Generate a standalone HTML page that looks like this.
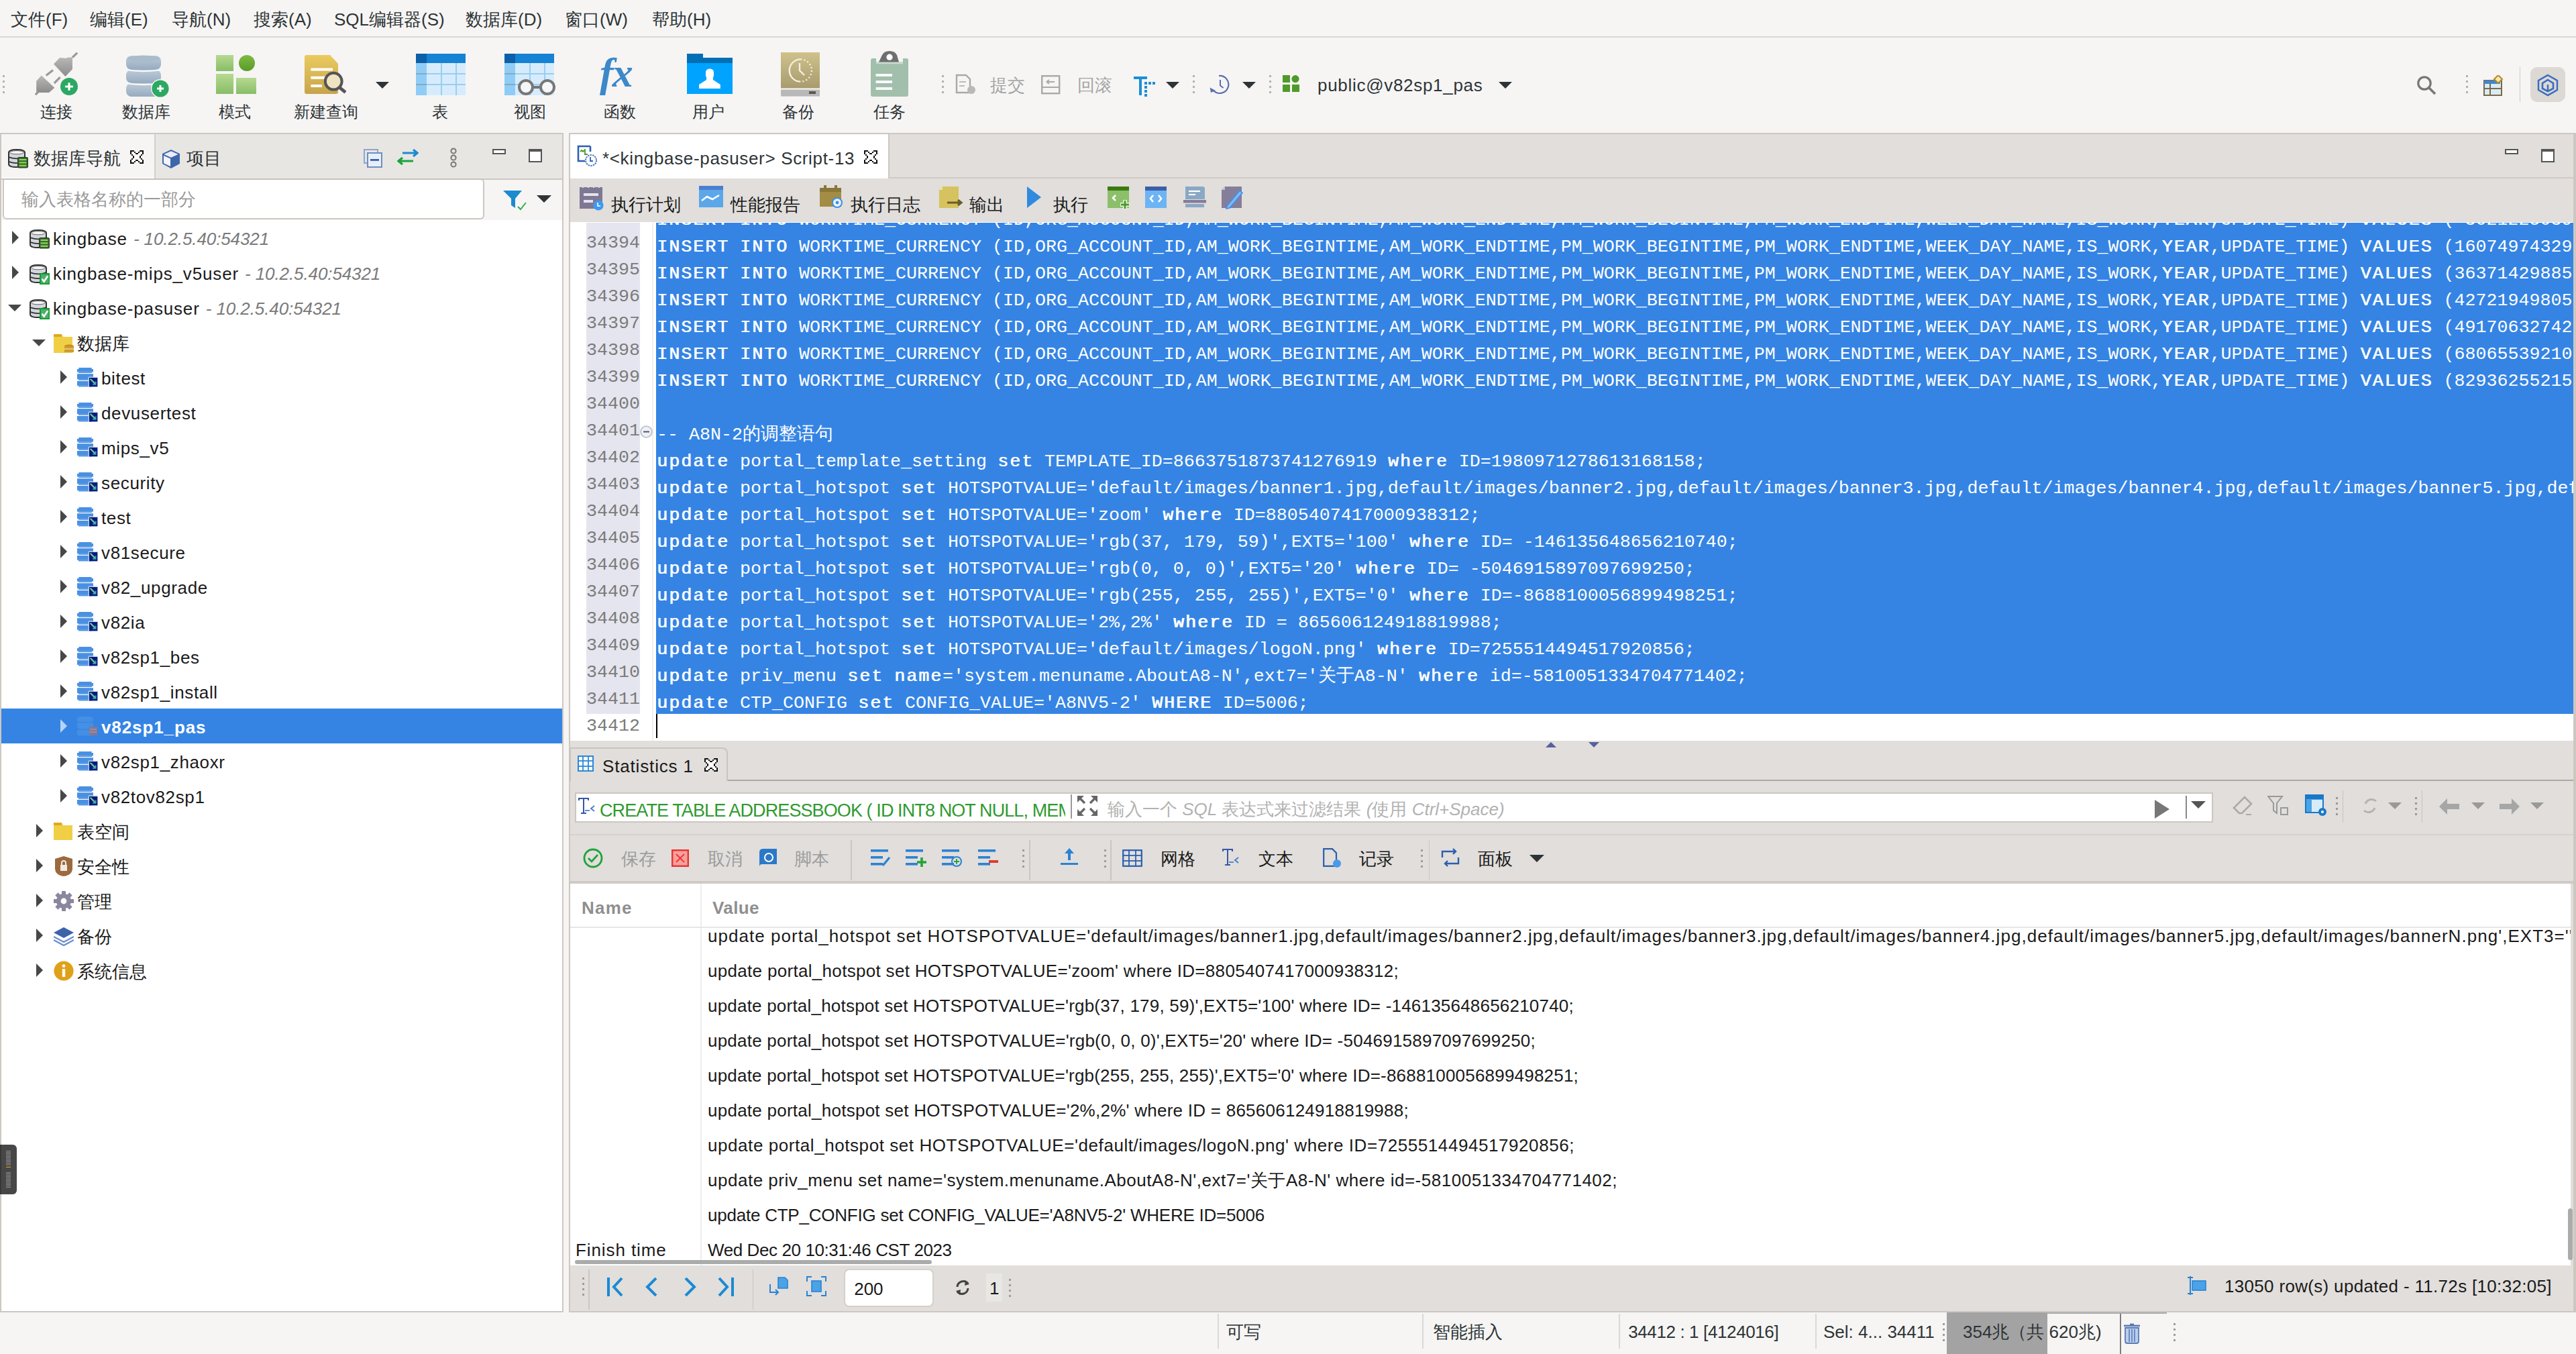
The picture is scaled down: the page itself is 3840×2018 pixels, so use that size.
<!DOCTYPE html>
<html><head><meta charset="utf-8"><title>KingbaseES</title>
<style>
html,body{margin:0;padding:0;background:#f6f5f4;overflow:hidden}
#s{position:relative;width:1920px;height:1009px;zoom:2;overflow:hidden;background:#f6f5f4;font-family:"Liberation Sans",sans-serif;font-size:13px}
#s div,#s span.t,#s svg{position:absolute}
#s span.t{white-space:nowrap}
#s span.t span{position:static}
.codewrap{left:489px;top:166px;width:1429px;height:386px;overflow:hidden}
.code{position:absolute;left:0.5px;height:20px;line-height:20px;font-family:"Liberation Mono",monospace;font-size:13.333px;color:#fff;white-space:pre}
.code b{font-weight:normal;letter-spacing:1px;text-shadow:0.4px 0 0 #fff}
.lnwrap{left:437px;top:166px;width:40px;height:386px;overflow:hidden}
.ln{position:absolute;left:0;width:39.5px;text-align:right;height:20px;line-height:20px;font-family:"Liberation Mono",monospace;font-size:13.333px;color:#7b7b7b}
</style></head>
<body><div id="s">
<span class="t" style="left:8px;top:5.5px;line-height:18px;font-size:13px;color:#2e3436">文件(F)</span>
<span class="t" style="left:67px;top:5.5px;line-height:18px;font-size:13px;color:#2e3436">编辑(E)</span>
<span class="t" style="left:128px;top:5.5px;line-height:18px;font-size:13px;color:#2e3436">导航(N)</span>
<span class="t" style="left:189px;top:5.5px;line-height:18px;font-size:13px;color:#2e3436">搜索(A)</span>
<span class="t" style="left:249px;top:5.5px;line-height:18px;font-size:13px;color:#2e3436">SQL编辑器(S)</span>
<span class="t" style="left:347px;top:5.5px;line-height:18px;font-size:13px;color:#2e3436">数据库(D)</span>
<span class="t" style="left:421px;top:5.5px;line-height:18px;font-size:13px;color:#2e3436">窗口(W)</span>
<span class="t" style="left:486px;top:5.5px;line-height:18px;font-size:13px;color:#2e3436">帮助(H)</span>
<div style="left:0px;top:27px;width:1920px;height:1px;background:#dcd8d4"></div>
<div style="left:2px;top:56px;width:1.5px;height:1.5px;background:#b9b3ad"></div>
<div style="left:2px;top:60px;width:1.5px;height:1.5px;background:#b9b3ad"></div>
<div style="left:2px;top:64px;width:1.5px;height:1.5px;background:#b9b3ad"></div>
<div style="left:2px;top:68px;width:1.5px;height:1.5px;background:#b9b3ad"></div>
<svg style="left:26px;top:39px" width="32" height="32" viewBox="0 0 32 32">
<defs><linearGradient id="plg" x1="0" x2="0" y1="0" y2="1"><stop offset="0" stop-color="#b8b8b8"/><stop offset="1" stop-color="#8c8c8c"/></linearGradient></defs>
<path d="M14 8.7 L18.5 4 L23 4.4 L25 3.7 L28 3.7 L28 12.5 L22.7 18 Z" fill="url(#plg)"/>
<path d="M1.1 21.4 L4.9 17.3 L14.7 26.4 L10.5 30 L1.1 30 Z" fill="url(#plg)"/>
<g stroke="#999" stroke-width="1.6"><line x1="28" y1="3.8" x2="31.6" y2="0.3"/><line x1="8.4" y1="17.2" x2="13.5" y2="13.2"/><line x1="14.4" y1="23" x2="18.8" y2="18.6"/><line x1="0.4" y1="31.6" x2="2.5" y2="29.5"/></g>
<circle cx="25.5" cy="25.5" r="6.5" fill="#2ba862"/><path d="M22.6 25.5h5.8M25.5 22.6v5.8" stroke="#fff" stroke-width="1.5"/></svg>
<span class="t" style="left:7.0px;top:75.5px;width:70px;text-align:center;line-height:16px;font-size:12px;color:#2e3436">连接</span>
<svg style="left:93px;top:40px" width="34" height="33" viewBox="0 0 34 33">
<defs><linearGradient id="dbg" x1="0" x2="0" y1="0" y2="1"><stop offset="0" stop-color="#bccbd8"/><stop offset="1" stop-color="#97abbf"/></linearGradient></defs>
<g fill="url(#dbg)">
<rect x="1" y="1.5" width="26" height="10.5" rx="4"/><rect x="1" y="12" width="26" height="10" rx="4"/><rect x="1" y="22" width="26" height="10" rx="4"/></g>
<ellipse cx="14" cy="3.6" rx="12" ry="2.3" fill="#a9bccc"/>
<g stroke="#f4f7fa" stroke-width="1.1" fill="none"><path d="M2 12.2 Q14 14 26 12.2"/><path d="M2 22.2 Q14 24 26 22.2"/></g>
<circle cx="26.5" cy="26" r="7" fill="#f6f5f4"/><circle cx="26.5" cy="26" r="6.3" fill="#2ba862"/><path d="M24 26h5M26.5 23.5v5" stroke="#fff" stroke-width="1.5"/></svg>
<span class="t" style="left:74.0px;top:75.5px;width:70px;text-align:center;line-height:16px;font-size:12px;color:#2e3436">数据库</span>
<svg style="left:160px;top:40px" width="33" height="32" viewBox="0 0 33 32">
<defs><linearGradient id="mg" x1="0" x2="0" y1="0" y2="1"><stop offset="0" stop-color="#b6d991"/><stop offset="1" stop-color="#88bd66"/></linearGradient>
<linearGradient id="mc" x1="0" x2="0" y1="0" y2="1"><stop offset="0" stop-color="#7fba45"/><stop offset="1" stop-color="#5a9c25"/></linearGradient></defs>
<rect x="1" y="1" width="13" height="12" fill="url(#mg)"/><circle cx="24" cy="7" r="6" fill="url(#mc)"/>
<rect x="1" y="15" width="13" height="15" fill="url(#mg)"/><rect x="16" y="18" width="15" height="12" fill="url(#mg)"/></svg>
<span class="t" style="left:140.0px;top:75.5px;width:70px;text-align:center;line-height:16px;font-size:12px;color:#2e3436">模式</span>
<svg style="left:227px;top:40px" width="34" height="32" viewBox="0 0 34 32">
<defs><linearGradient id="qg" x1="0" x2="0" y1="0" y2="1"><stop offset="0" stop-color="#ebca5f"/><stop offset="1" stop-color="#c8a44b"/></linearGradient></defs>
<path d="M1.5 1 H19 L25 7.5 V28.5 Q25 30 23.5 30 H1.5 Q0 30 0 28.5 V2.5 Q0 1 1.5 1 Z" fill="url(#qg)"/>
<g stroke="#fff" stroke-width="2"><line x1="4.7" y1="11.7" x2="21" y2="11.7"/><line x1="4.7" y1="17.9" x2="16.3" y2="17.9"/><line x1="4.7" y1="24" x2="13" y2="24"/></g>
<circle cx="21.6" cy="20.6" r="6.2" fill="#efe3c2" stroke="#555" stroke-width="2"/><line x1="25.8" y1="25" x2="30.5" y2="28.8" stroke="#555" stroke-width="2.4"/></svg>
<svg style="left:280px;top:61px" width="10" height="5" viewBox="0 0 10 5"><path d="M0 0 H10 L5 5 Z" fill="#2e3436"/></svg>
<span class="t" style="left:208.0px;top:75.5px;width:70px;text-align:center;line-height:16px;font-size:12px;color:#2e3436">新建查询</span>
<svg style="left:310px;top:40px" width="38" height="32" viewBox="0 0 38 32"><rect x="0" y="0" width="37" height="31" fill="#d6ecfd"/>
<rect x="0" y="0" width="37" height="7" fill="#1582d4"/><rect x="0" y="0" width="8" height="7" fill="#0d5fa8"/>
<rect x="0" y="7" width="8" height="24" fill="#8fcdf6"/>
<g stroke="#9bcdee" stroke-width="1"><line x1="8" y1="15" x2="37" y2="15"/><line x1="8" y1="23" x2="37" y2="23"/><line x1="19" y1="7" x2="19" y2="31"/><line x1="30" y1="7" x2="30" y2="31"/></g>
<g stroke="#8aa9bd" stroke-width="1"><line x1="0" y1="15" x2="8" y2="15"/><line x1="0" y1="23" x2="8" y2="23"/></g></svg>
<span class="t" style="left:293.0px;top:75.5px;width:70px;text-align:center;line-height:16px;font-size:12px;color:#2e3436">表</span>
<svg style="left:376px;top:40px" width="38" height="32" viewBox="0 0 38 32"><rect x="0" y="0" width="37" height="31" fill="#d6ecfd"/>
<rect x="0" y="0" width="37" height="7" fill="#1582d4"/><rect x="0" y="0" width="8" height="7" fill="#0d5fa8"/>
<rect x="0" y="7" width="8" height="24" fill="#8fcdf6"/>
<g stroke="#9bcdee" stroke-width="1"><line x1="8" y1="15" x2="37" y2="15"/><line x1="8" y1="23" x2="37" y2="23"/><line x1="19" y1="7" x2="19" y2="31"/><line x1="30" y1="7" x2="30" y2="31"/></g>
<g stroke="#8aa9bd" stroke-width="1"><line x1="0" y1="15" x2="8" y2="15"/><line x1="0" y1="23" x2="8" y2="23"/></g><g fill="#f4f6f8" stroke="#777" stroke-width="2"><circle cx="16" cy="25" r="5"/><circle cx="32" cy="25" r="5"/></g><line x1="21" y1="25" x2="27" y2="25" stroke="#777" stroke-width="2"/></svg>
<span class="t" style="left:360.0px;top:75.5px;width:70px;text-align:center;line-height:16px;font-size:12px;color:#2e3436">视图</span>
<span class="t" style="left:447px;top:36px;font-family:'Liberation Serif',serif;font-style:italic;font-weight:bold;font-size:31px;line-height:36px;color:#3d88c9;letter-spacing:-1px">fx</span>
<span class="t" style="left:427.0px;top:75.5px;width:70px;text-align:center;line-height:16px;font-size:12px;color:#2e3436">函数</span>
<svg style="left:512px;top:40px" width="34" height="30" viewBox="0 0 34 30"><rect x="0" y="3" width="34" height="27" fill="#00a3ff"/><rect x="0" y="3" width="34" height="4" fill="#006fb3"/><rect x="0" y="0" width="12" height="3.2" fill="#006fb3"/>
<rect x="14" y="11.2" width="6" height="7.5" rx="2.6" fill="#fff"/><path d="M14.5 18 H19.5 L19.5 19.5 L24.9 23 V26 H9 V23 L14.5 19.5 Z" fill="#fff"/></svg>
<span class="t" style="left:493.0px;top:75.5px;width:70px;text-align:center;line-height:16px;font-size:12px;color:#2e3436">用户</span>
<svg style="left:582px;top:39px" width="30" height="33" viewBox="0 0 30 33"><defs><linearGradient id="bkg" x1="0" x2="0" y1="0" y2="1"><stop offset="0" stop-color="#cfc28c"/><stop offset="1" stop-color="#a89b6e"/></linearGradient></defs>
<rect x="0" y="0" width="29" height="26.7" fill="url(#bkg)"/><rect x="0" y="27.8" width="29" height="5" fill="#b8b8b8"/><rect x="21" y="29" width="5" height="2" fill="#5e5850"/>
<path d="M14.7 5.2 A8.3 8.3 0 0 0 14.7 21.8" fill="none" stroke="#f4efe0" stroke-width="1.2"/><path d="M14.7 5.2 A8.3 8.3 0 0 1 14.7 21.8" fill="none" stroke="#f4efe0" stroke-width="1.2" stroke-dasharray="1 1.6"/><path d="M14 8 V13.5 L17.5 17" stroke="#f4efe0" stroke-width="1.2" fill="none"/></svg>
<span class="t" style="left:560.0px;top:75.5px;width:70px;text-align:center;line-height:16px;font-size:12px;color:#2e3436">备份</span>
<svg style="left:649px;top:38px" width="29" height="35" viewBox="0 0 29 35"><path d="M1.5 5.5 H4 V8.8 H24 V5.5 H26.5 Q28 5.5 28 7 V32.5 Q28 34 26.5 34 H1.5 Q0 34 0 32.5 V7 Q0 5.5 1.5 5.5 Z" fill="#a2bfac"/><rect x="4" y="8" width="20" height="1.6" fill="#c9dccf"/>
<path d="M6 8.2 L8.5 3 Q10 0 14 0 Q18 0 19.5 3 L21 8.2 Z" fill="#6f6f6f"/><circle cx="14" cy="4.6" r="2.3" fill="#fff"/>
<g fill="#f8f8fa"><rect x="3.8" y="17" width="12.2" height="2"/><rect x="3.8" y="22" width="12.2" height="2"/><rect x="3.8" y="27" width="12.2" height="2"/></g></svg>
<span class="t" style="left:628.0px;top:75.5px;width:70px;text-align:center;line-height:16px;font-size:12px;color:#2e3436">任务</span>
<div style="left:702px;top:56px;width:1.5px;height:1.5px;background:#b7b1aa"></div>
<div style="left:702px;top:60px;width:1.5px;height:1.5px;background:#b7b1aa"></div>
<div style="left:702px;top:64px;width:1.5px;height:1.5px;background:#b7b1aa"></div>
<div style="left:702px;top:68px;width:1.5px;height:1.5px;background:#b7b1aa"></div>
<svg style="left:712px;top:55px" width="16" height="16" viewBox="0 0 16 16"><path d="M1 1 H8 L11 4 V14 H1 Z" fill="none" stroke="#a9a9a9" stroke-width="1.2"/><line x1="3" y1="6" x2="8" y2="6" stroke="#bbb"/><line x1="3" y1="9" x2="7" y2="9" stroke="#bbb"/><circle cx="12" cy="12" r="3" fill="#b9b9b9"/></svg>
<span class="t" style="left:738px;top:55.5px;line-height:16px;font-size:13px;color:#a4a4a4">提交</span>
<svg style="left:776px;top:56px" width="15" height="15" viewBox="0 0 15 15"><rect x="0.6" y="0.6" width="13" height="13" fill="none" stroke="#a9a9a9" stroke-width="1.2"/><line x1="0.6" y1="9" x2="13.6" y2="9" stroke="#a9a9a9"/><path d="M4 5 H10 M4 5 L6 3.5 M4 5 L6 6.5" stroke="#aaa" fill="none"/></svg>
<span class="t" style="left:803px;top:55.5px;line-height:16px;font-size:13px;color:#a4a4a4">回滚</span>
<svg style="left:845px;top:56px" width="16" height="16" viewBox="0 0 16 16"><path d="M0 1 H10 V3 H6 V15 H4 V3 H0 Z" fill="#1c8fd6"/><g fill="#1c8fd6"><rect x="8" y="5" width="2" height="2"/><rect x="11" y="5" width="2" height="2"/><rect x="14" y="5" width="2" height="2"/><rect x="8" y="8" width="2" height="2"/><rect x="8" y="11" width="2" height="2"/><rect x="8" y="14" width="2" height="2"/></g></svg>
<svg style="left:869px;top:61px" width="10" height="6" viewBox="0 0 10 6"><path d="M0 0 H10 L5 5 Z" fill="#2e3436"/></svg>
<div style="left:889px;top:56px;width:1.5px;height:1.5px;background:#b7b1aa"></div>
<div style="left:889px;top:60px;width:1.5px;height:1.5px;background:#b7b1aa"></div>
<div style="left:889px;top:64px;width:1.5px;height:1.5px;background:#b7b1aa"></div>
<div style="left:889px;top:68px;width:1.5px;height:1.5px;background:#b7b1aa"></div>
<svg style="left:901px;top:55px" width="16" height="16" viewBox="0 0 16 16"><path d="M3.5 12.5 A6.5 6.5 0 1 0 7.5 1.5" fill="none" stroke="#5b6fb0" stroke-width="1.1"/><path d="M8.5 4.5 V8.8 L10.8 10.5" fill="none" stroke="#5b6fb0" stroke-width="1"/><path d="M0.8 10.2 L1.5 14 L5 12.5 Z" fill="#5b6fb0"/></svg>
<svg style="left:926px;top:61px" width="10" height="6" viewBox="0 0 10 6"><path d="M0 0 H10 L5 5 Z" fill="#2e3436"/></svg>
<div style="left:946px;top:56px;width:1.5px;height:1.5px;background:#b7b1aa"></div>
<div style="left:946px;top:60px;width:1.5px;height:1.5px;background:#b7b1aa"></div>
<div style="left:946px;top:64px;width:1.5px;height:1.5px;background:#b7b1aa"></div>
<div style="left:946px;top:68px;width:1.5px;height:1.5px;background:#b7b1aa"></div>
<svg style="left:956px;top:56px" width="13" height="13" viewBox="0 0 13 13"><rect x="0" y="0" width="5.5" height="5.5" fill="#4f9a2a"/><circle cx="9.5" cy="2.8" r="2.8" fill="#4f9a2a"/><rect x="0" y="7" width="5.5" height="5.5" fill="#4f9a2a"/><rect x="7" y="7" width="5.5" height="5.5" fill="#4f9a2a"/></svg>
<span class="t" style="left:982px;top:55.5px;line-height:16px;font-size:13px;color:#2e3436;letter-spacing:0.35px">public@v82sp1_pas</span>
<svg style="left:1117px;top:61px" width="10" height="6" viewBox="0 0 10 6"><path d="M0 0 H10 L5 5 Z" fill="#2e3436"/></svg>
<svg style="left:1801px;top:56px" width="16" height="16" viewBox="0 0 16 16"><circle cx="6" cy="6" r="4.6" fill="none" stroke="#777" stroke-width="1.6"/><line x1="9.5" y1="9.5" x2="14" y2="14" stroke="#777" stroke-width="1.8"/></svg>
<div style="left:1838px;top:56px;width:1.5px;height:1.5px;background:#b7b1aa"></div>
<div style="left:1838px;top:60px;width:1.5px;height:1.5px;background:#b7b1aa"></div>
<div style="left:1838px;top:64px;width:1.5px;height:1.5px;background:#b7b1aa"></div>
<div style="left:1838px;top:68px;width:1.5px;height:1.5px;background:#b7b1aa"></div>
<svg style="left:1851px;top:56px" width="16" height="16" viewBox="0 0 16 16"><rect x="0.5" y="4" width="13" height="11" fill="#d9ebf9" stroke="#7a6a44"/><rect x="0.5" y="4" width="12" height="2.5" fill="#3f86d4"/><line x1="5" y1="6" x2="5" y2="15" stroke="#7a6a44"/><line x1="0.5" y1="10" x2="13" y2="10" stroke="#7a6a44"/><path d="M11 0 L14 3 L11 6 L8 3 Z" fill="#f4e7b8" stroke="#b88a1b"/></svg>
<div style="left:1878px;top:50px;width:0.6px;height:26px;background:#d0cbc6"></div>
<div style="left:1886px;top:50px;width:26px;height:26px;background:#dcd8d4;border-radius:5px"></div>
<svg style="left:1891px;top:55px" width="16" height="17" viewBox="0 0 16 17"><path d="M8 1 L15 5 V12 L8 16 L1 12 V5 Z" fill="none" stroke="#3a6cc0" stroke-width="1.2"/><path d="M8 4.5 L12 7 V11 L8 13 L4 11 V7 Z" fill="none" stroke="#3a6cc0" stroke-width="1.3"/><line x1="8" y1="8" x2="8" y2="13" stroke="#3a6cc0" stroke-width="1.2"/></svg>
<div style="left:0px;top:99px;width:420px;height:879px;background:#fff;border:1px solid #cdc7c2;box-sizing:border-box"></div>
<div style="left:1px;top:100px;width:418px;height:34px;background:#e8e6e3;border-bottom:1px solid #cdc7c2;box-sizing:border-box"></div>
<div style="left:1px;top:100px;width:114px;height:33px;background:#f6f5f4"></div>
<div style="left:1px;top:132px;width:114px;height:1px;background:#fafafa"></div>
<div style="left:115px;top:100px;width:1px;height:33px;background:#d3cfcb"></div>
<span class="t" style="left:25px;top:110.0px;line-height:16px;font-size:13px;color:#2e3436">数据库导航</span>
<svg style="left:97px;top:112px" width="10" height="10" viewBox="0 0 10 10"><path d="M1 1h2v1h-2zM7 1h2v1h-2zM1 2h3v1h-3zM6 2h3v1h-3zM2 3h6v1h-6zM3 4h4v2h-4zM2 6h6v1h-6zM1 7h3v1h-3zM6 7h3v1h-3zM1 8h2v1h-2zM7 8h2v1h-2z" fill="#fff" shape-rendering="crispEdges"/><path d="M0 0h3v1h-3zM7 0h3v1h-3zM0 1h1v2h-1zM3 1h1v1h-1zM6 1h1v1h-1zM9 1h1v2h-1zM4 2h2v1h-2zM1 3h1v1h-1zM8 3h1v1h-1zM2 4h1v2h-1zM7 4h1v2h-1zM1 6h1v1h-1zM8 6h1v1h-1zM0 7h1v2h-1zM4 7h2v1h-2zM9 7h1v2h-1zM3 8h1v1h-1zM6 8h1v1h-1zM0 9h3v1h-3zM7 9h3v1h-3z" fill="#111" shape-rendering="crispEdges"/></svg>
<svg style="left:120px;top:111px" width="15" height="15" viewBox="0 0 15 15"><path d="M7.5 0.5 L14 3.5 V11 L7.5 14.5 L1 11 V3.5 Z" fill="#3e67ab"/><path d="M2.2 4 L7.5 1.6 L12.8 4 L7.5 6.4 Z" fill="#e9eef7"/><path d="M2 5 L7 7.2 V13 L2 10.6 Z" fill="#f2f4f8"/></svg>
<span class="t" style="left:139px;top:110.0px;line-height:16px;font-size:13px;color:#2e3436">项目</span>
<svg style="left:271px;top:111px" width="14" height="14" viewBox="0 0 14 14"><rect x="0.5" y="0.5" width="10" height="10" fill="none" stroke="#8ea7cc"/><rect x="3" y="3" width="10.5" height="10.5" fill="#e8eef8" stroke="#6f8fbf"/><line x1="5" y1="8.2" x2="11.5" y2="8.2" stroke="#2456a6" stroke-width="1.3"/></svg>
<svg style="left:296px;top:111px" width="16" height="12" viewBox="0 0 16 12"><path d="M4 3 H15 M12 0.5 L15 3 L12 5.5" stroke="#1c8ad0" stroke-width="1.6" fill="none"/><path d="M12 9 H1 M4 6.5 L1 9 L4 11.5" stroke="#19a43a" stroke-width="1.6" fill="none"/></svg>
<svg style="left:335px;top:110px" width="6" height="15" viewBox="0 0 6 15"><g fill="none" stroke="#777" stroke-width="1"><circle cx="3" cy="2.5" r="1.8"/><circle cx="3" cy="7.5" r="1.8"/><circle cx="3" cy="12.5" r="1.8"/></g></svg>
<div style="left:367px;top:111px;width:10px;height:4px;border:1px solid #555;box-sizing:border-box;background:#fff"></div>
<div style="left:394px;top:111px;width:10px;height:10px;border:1px solid #555;border-top-width:2px;box-sizing:border-box;background:#fff"></div>
<div style="left:1px;top:134px;width:418px;height:30px;background:#f6f5f4"></div>
<div style="left:2px;top:133px;width:359px;height:30.5px;background:#fff;border:1px solid #cdc7c2;border-top-color:#c7c1bc;border-radius:0 3px 3px 3px;box-sizing:border-box"></div>
<span class="t" style="left:16px;top:140.5px;line-height:16px;font-size:13px;color:#9a9a9a">输入表格名称的一部分</span>
<svg style="left:375px;top:141px" width="18" height="16" viewBox="0 0 18 16"><path d="M0 1 H14 L9 7 V14 L6 12 V7 Z" fill="#1c8ad0"/><path d="M11 13 L13 15 L17 10" stroke="#2fae4c" stroke-width="1" fill="none"/></svg>
<svg style="left:400px;top:145.5px" width="11" height="6" viewBox="0 0 11 6"><path d="M0 0 H11 L5.5 5.5 Z" fill="#2e3436"/></svg>
<svg style="left:6px;top:111px" width="15" height="15" viewBox="0 0 15 15"><path d="M0.5 2.8 Q0.5 0.5 6.5 0.5 Q12.5 0.5 12.5 2.8 V11.2 Q12.5 13.5 6.5 13.5 Q0.5 13.5 0.5 11.2 Z" fill="#d3d6dc" stroke="#333" stroke-width="1"/><ellipse cx="6.5" cy="2.6" rx="5.2" ry="1.3" fill="#f6f6f6" stroke="#666" stroke-width="0.5"/><g stroke="#333" stroke-width="0.9" fill="none"><path d="M0.8 6.2 Q6.5 8.2 12.2 6.2"/><path d="M0.8 9.6 Q6.5 11.6 12.2 9.6"/></g><rect x="7.3" y="6.3" width="7.4" height="7.6" rx="0.8" fill="#405f35" stroke="#2c3f25" stroke-width="0.6"/><g stroke="#82e04f" stroke-width="1.1"><line x1="8.3" y1="8" x2="13.7" y2="8"/><line x1="8.3" y1="10.2" x2="13.7" y2="10.2"/><line x1="8.3" y1="12.4" x2="13.7" y2="12.4"/></g></svg>
<svg style="left:9px;top:172px" width="5" height="10" viewBox="0 0 5 10"><path d="M0 0 L5 5 L0 10 Z" fill="#474747"/></svg>
<svg style="left:22px;top:171px" width="15" height="15" viewBox="0 0 15 15"><path d="M0.5 2.8 Q0.5 0.5 6.5 0.5 Q12.5 0.5 12.5 2.8 V11.2 Q12.5 13.5 6.5 13.5 Q0.5 13.5 0.5 11.2 Z" fill="#d3d6dc" stroke="#333" stroke-width="1"/><ellipse cx="6.5" cy="2.6" rx="5.2" ry="1.3" fill="#f6f6f6" stroke="#666" stroke-width="0.5"/><g stroke="#333" stroke-width="0.9" fill="none"><path d="M0.8 6.2 Q6.5 8.2 12.2 6.2"/><path d="M0.8 9.6 Q6.5 11.6 12.2 9.6"/></g><rect x="7.3" y="6.3" width="7.4" height="7.6" rx="0.8" fill="#405f35" stroke="#2c3f25" stroke-width="0.6"/><g stroke="#82e04f" stroke-width="1.1"><line x1="8.3" y1="8" x2="13.7" y2="8"/><line x1="8.3" y1="10.2" x2="13.7" y2="10.2"/><line x1="8.3" y1="12.4" x2="13.7" y2="12.4"/></g></svg>
<span class="t" style="left:39.5px;top:170px;line-height:16px;font-size:13px;color:#1a1a1a"><span style="letter-spacing:0.42px">kingbase</span><span style="color:#7a7a7a;font-style:italic;letter-spacing:-0.05px"><span style="margin-left:1px"> </span>- 10.2.5.40:54321</span></span>
<svg style="left:9px;top:198px" width="5" height="10" viewBox="0 0 5 10"><path d="M0 0 L5 5 L0 10 Z" fill="#474747"/></svg>
<svg style="left:22px;top:197px" width="15" height="15" viewBox="0 0 15 15"><path d="M0.5 2.8 Q0.5 0.5 6.5 0.5 Q12.5 0.5 12.5 2.8 V11.2 Q12.5 13.5 6.5 13.5 Q0.5 13.5 0.5 11.2 Z" fill="#d3d6dc" stroke="#333" stroke-width="1"/><ellipse cx="6.5" cy="2.6" rx="5.2" ry="1.3" fill="#f6f6f6" stroke="#666" stroke-width="0.5"/><g stroke="#333" stroke-width="0.9" fill="none"><path d="M0.8 6.2 Q6.5 8.2 12.2 6.2"/><path d="M0.8 9.6 Q6.5 11.6 12.2 9.6"/></g><rect x="8" y="7" width="6.8" height="7.6" fill="#4fae67" stroke="#0e9c35" stroke-width="1"/><path d="M9.3 10.8 L10.8 12.8 L13.6 8.6" stroke="#fff" stroke-width="1.3" fill="none"/></svg>
<span class="t" style="left:39.5px;top:196px;line-height:16px;font-size:13px;color:#1a1a1a"><span style="letter-spacing:0.42px">kingbase-mips_v5user</span><span style="color:#7a7a7a;font-style:italic;letter-spacing:-0.05px"><span style="margin-left:1px"> </span>- 10.2.5.40:54321</span></span>
<svg style="left:6px;top:227px" width="10" height="5" viewBox="0 0 10 5"><path d="M0 0 H10 L5 5 Z" fill="#474747"/></svg>
<svg style="left:22px;top:223px" width="15" height="15" viewBox="0 0 15 15"><path d="M0.5 2.8 Q0.5 0.5 6.5 0.5 Q12.5 0.5 12.5 2.8 V11.2 Q12.5 13.5 6.5 13.5 Q0.5 13.5 0.5 11.2 Z" fill="#d3d6dc" stroke="#333" stroke-width="1"/><ellipse cx="6.5" cy="2.6" rx="5.2" ry="1.3" fill="#f6f6f6" stroke="#666" stroke-width="0.5"/><g stroke="#333" stroke-width="0.9" fill="none"><path d="M0.8 6.2 Q6.5 8.2 12.2 6.2"/><path d="M0.8 9.6 Q6.5 11.6 12.2 9.6"/></g><rect x="8" y="7" width="6.8" height="7.6" fill="#4fae67" stroke="#0e9c35" stroke-width="1"/><path d="M9.3 10.8 L10.8 12.8 L13.6 8.6" stroke="#fff" stroke-width="1.3" fill="none"/></svg>
<span class="t" style="left:39.5px;top:222px;line-height:16px;font-size:13px;color:#1a1a1a"><span style="letter-spacing:0.42px">kingbase-pasuser</span><span style="color:#7a7a7a;font-style:italic;letter-spacing:-0.05px"><span style="margin-left:1px"> </span>- 10.2.5.40:54321</span></span>
<svg style="left:24.2px;top:253px" width="10" height="5" viewBox="0 0 10 5"><path d="M0 0 H10 L5 5 Z" fill="#474747"/></svg>
<svg style="left:40px;top:248px" width="16" height="16" viewBox="0 0 16 16"><path d="M0 1 H6 L7 3 H14 V15 H0 Z" fill="#f0cf45"/><rect x="0" y="1" width="6" height="2" fill="#e0a81c"/><ellipse cx="11.5" cy="10" rx="3.5" ry="1.2" fill="#c48d1f"/><rect x="8" y="10" width="7" height="4.5" fill="#d19b2a"/><path d="M8 12 h7" stroke="#f2d690" stroke-width="0.7"/></svg>
<span class="t" style="left:57.5px;top:248.0px;line-height:16px;font-size:13px;color:#1a1a1a">数据库</span>
<svg style="left:45px;top:276px" width="5" height="10" viewBox="0 0 5 10"><path d="M0 0 L5 5 L0 10 Z" fill="#474747"/></svg>
<svg style="left:57.5px;top:274px" width="16" height="15" viewBox="0 0 16 15"><g fill="#4a90e2"><rect x="1.2" y="0" width="9.6" height="1.2"/><rect x="0" y="1" width="12" height="2.3"/><rect x="1" y="3.3" width="10" height="0.7"/><rect x="0" y="4.6" width="12" height="4" /><rect x="1" y="8.6" width="10" height="0.8"/><rect x="0" y="10" width="12" height="3.4"/><rect x="1" y="13.4" width="10" height="0.8"/></g><rect x="9" y="7.5" width="6.2" height="6.7" fill="#001c80"/><path d="M8.6 7.1 H15.4 M8.6 7.1 V14.4" stroke="#d4d4e4" stroke-width="0.6"/><path d="M9.8 8.4 L13.6 12.2" stroke="#72c98a" stroke-width="1.1"/><path d="M13.8 10.2 V12.4 H11.6" stroke="#3b9fb5" stroke-width="0.9" fill="none"/></svg>
<span class="t" style="left:75.5px;top:274.0px;line-height:16px;font-size:13px;color:#1a1a1a;letter-spacing:0.32px">bitest</span>
<svg style="left:45px;top:302px" width="5" height="10" viewBox="0 0 5 10"><path d="M0 0 L5 5 L0 10 Z" fill="#474747"/></svg>
<svg style="left:57.5px;top:300px" width="16" height="15" viewBox="0 0 16 15"><g fill="#4a90e2"><rect x="1.2" y="0" width="9.6" height="1.2"/><rect x="0" y="1" width="12" height="2.3"/><rect x="1" y="3.3" width="10" height="0.7"/><rect x="0" y="4.6" width="12" height="4" /><rect x="1" y="8.6" width="10" height="0.8"/><rect x="0" y="10" width="12" height="3.4"/><rect x="1" y="13.4" width="10" height="0.8"/></g><rect x="9" y="7.5" width="6.2" height="6.7" fill="#001c80"/><path d="M8.6 7.1 H15.4 M8.6 7.1 V14.4" stroke="#d4d4e4" stroke-width="0.6"/><path d="M9.8 8.4 L13.6 12.2" stroke="#72c98a" stroke-width="1.1"/><path d="M13.8 10.2 V12.4 H11.6" stroke="#3b9fb5" stroke-width="0.9" fill="none"/></svg>
<span class="t" style="left:75.5px;top:300.0px;line-height:16px;font-size:13px;color:#1a1a1a;letter-spacing:0.32px">devusertest</span>
<svg style="left:45px;top:328px" width="5" height="10" viewBox="0 0 5 10"><path d="M0 0 L5 5 L0 10 Z" fill="#474747"/></svg>
<svg style="left:57.5px;top:326px" width="16" height="15" viewBox="0 0 16 15"><g fill="#4a90e2"><rect x="1.2" y="0" width="9.6" height="1.2"/><rect x="0" y="1" width="12" height="2.3"/><rect x="1" y="3.3" width="10" height="0.7"/><rect x="0" y="4.6" width="12" height="4" /><rect x="1" y="8.6" width="10" height="0.8"/><rect x="0" y="10" width="12" height="3.4"/><rect x="1" y="13.4" width="10" height="0.8"/></g><rect x="9" y="7.5" width="6.2" height="6.7" fill="#001c80"/><path d="M8.6 7.1 H15.4 M8.6 7.1 V14.4" stroke="#d4d4e4" stroke-width="0.6"/><path d="M9.8 8.4 L13.6 12.2" stroke="#72c98a" stroke-width="1.1"/><path d="M13.8 10.2 V12.4 H11.6" stroke="#3b9fb5" stroke-width="0.9" fill="none"/></svg>
<span class="t" style="left:75.5px;top:326.0px;line-height:16px;font-size:13px;color:#1a1a1a;letter-spacing:0.32px">mips_v5</span>
<svg style="left:45px;top:354px" width="5" height="10" viewBox="0 0 5 10"><path d="M0 0 L5 5 L0 10 Z" fill="#474747"/></svg>
<svg style="left:57.5px;top:352px" width="16" height="15" viewBox="0 0 16 15"><g fill="#4a90e2"><rect x="1.2" y="0" width="9.6" height="1.2"/><rect x="0" y="1" width="12" height="2.3"/><rect x="1" y="3.3" width="10" height="0.7"/><rect x="0" y="4.6" width="12" height="4" /><rect x="1" y="8.6" width="10" height="0.8"/><rect x="0" y="10" width="12" height="3.4"/><rect x="1" y="13.4" width="10" height="0.8"/></g><rect x="9" y="7.5" width="6.2" height="6.7" fill="#001c80"/><path d="M8.6 7.1 H15.4 M8.6 7.1 V14.4" stroke="#d4d4e4" stroke-width="0.6"/><path d="M9.8 8.4 L13.6 12.2" stroke="#72c98a" stroke-width="1.1"/><path d="M13.8 10.2 V12.4 H11.6" stroke="#3b9fb5" stroke-width="0.9" fill="none"/></svg>
<span class="t" style="left:75.5px;top:352.0px;line-height:16px;font-size:13px;color:#1a1a1a;letter-spacing:0.32px">security</span>
<svg style="left:45px;top:380px" width="5" height="10" viewBox="0 0 5 10"><path d="M0 0 L5 5 L0 10 Z" fill="#474747"/></svg>
<svg style="left:57.5px;top:378px" width="16" height="15" viewBox="0 0 16 15"><g fill="#4a90e2"><rect x="1.2" y="0" width="9.6" height="1.2"/><rect x="0" y="1" width="12" height="2.3"/><rect x="1" y="3.3" width="10" height="0.7"/><rect x="0" y="4.6" width="12" height="4" /><rect x="1" y="8.6" width="10" height="0.8"/><rect x="0" y="10" width="12" height="3.4"/><rect x="1" y="13.4" width="10" height="0.8"/></g><rect x="9" y="7.5" width="6.2" height="6.7" fill="#001c80"/><path d="M8.6 7.1 H15.4 M8.6 7.1 V14.4" stroke="#d4d4e4" stroke-width="0.6"/><path d="M9.8 8.4 L13.6 12.2" stroke="#72c98a" stroke-width="1.1"/><path d="M13.8 10.2 V12.4 H11.6" stroke="#3b9fb5" stroke-width="0.9" fill="none"/></svg>
<span class="t" style="left:75.5px;top:378.0px;line-height:16px;font-size:13px;color:#1a1a1a;letter-spacing:0.32px">test</span>
<svg style="left:45px;top:406px" width="5" height="10" viewBox="0 0 5 10"><path d="M0 0 L5 5 L0 10 Z" fill="#474747"/></svg>
<svg style="left:57.5px;top:404px" width="16" height="15" viewBox="0 0 16 15"><g fill="#4a90e2"><rect x="1.2" y="0" width="9.6" height="1.2"/><rect x="0" y="1" width="12" height="2.3"/><rect x="1" y="3.3" width="10" height="0.7"/><rect x="0" y="4.6" width="12" height="4" /><rect x="1" y="8.6" width="10" height="0.8"/><rect x="0" y="10" width="12" height="3.4"/><rect x="1" y="13.4" width="10" height="0.8"/></g><rect x="9" y="7.5" width="6.2" height="6.7" fill="#001c80"/><path d="M8.6 7.1 H15.4 M8.6 7.1 V14.4" stroke="#d4d4e4" stroke-width="0.6"/><path d="M9.8 8.4 L13.6 12.2" stroke="#72c98a" stroke-width="1.1"/><path d="M13.8 10.2 V12.4 H11.6" stroke="#3b9fb5" stroke-width="0.9" fill="none"/></svg>
<span class="t" style="left:75.5px;top:404.0px;line-height:16px;font-size:13px;color:#1a1a1a;letter-spacing:0.32px">v81secure</span>
<svg style="left:45px;top:432px" width="5" height="10" viewBox="0 0 5 10"><path d="M0 0 L5 5 L0 10 Z" fill="#474747"/></svg>
<svg style="left:57.5px;top:430px" width="16" height="15" viewBox="0 0 16 15"><g fill="#4a90e2"><rect x="1.2" y="0" width="9.6" height="1.2"/><rect x="0" y="1" width="12" height="2.3"/><rect x="1" y="3.3" width="10" height="0.7"/><rect x="0" y="4.6" width="12" height="4" /><rect x="1" y="8.6" width="10" height="0.8"/><rect x="0" y="10" width="12" height="3.4"/><rect x="1" y="13.4" width="10" height="0.8"/></g><rect x="9" y="7.5" width="6.2" height="6.7" fill="#001c80"/><path d="M8.6 7.1 H15.4 M8.6 7.1 V14.4" stroke="#d4d4e4" stroke-width="0.6"/><path d="M9.8 8.4 L13.6 12.2" stroke="#72c98a" stroke-width="1.1"/><path d="M13.8 10.2 V12.4 H11.6" stroke="#3b9fb5" stroke-width="0.9" fill="none"/></svg>
<span class="t" style="left:75.5px;top:430.0px;line-height:16px;font-size:13px;color:#1a1a1a;letter-spacing:0.32px">v82_upgrade</span>
<svg style="left:45px;top:458px" width="5" height="10" viewBox="0 0 5 10"><path d="M0 0 L5 5 L0 10 Z" fill="#474747"/></svg>
<svg style="left:57.5px;top:456px" width="16" height="15" viewBox="0 0 16 15"><g fill="#4a90e2"><rect x="1.2" y="0" width="9.6" height="1.2"/><rect x="0" y="1" width="12" height="2.3"/><rect x="1" y="3.3" width="10" height="0.7"/><rect x="0" y="4.6" width="12" height="4" /><rect x="1" y="8.6" width="10" height="0.8"/><rect x="0" y="10" width="12" height="3.4"/><rect x="1" y="13.4" width="10" height="0.8"/></g><rect x="9" y="7.5" width="6.2" height="6.7" fill="#001c80"/><path d="M8.6 7.1 H15.4 M8.6 7.1 V14.4" stroke="#d4d4e4" stroke-width="0.6"/><path d="M9.8 8.4 L13.6 12.2" stroke="#72c98a" stroke-width="1.1"/><path d="M13.8 10.2 V12.4 H11.6" stroke="#3b9fb5" stroke-width="0.9" fill="none"/></svg>
<span class="t" style="left:75.5px;top:456.0px;line-height:16px;font-size:13px;color:#1a1a1a;letter-spacing:0.32px">v82ia</span>
<svg style="left:45px;top:484px" width="5" height="10" viewBox="0 0 5 10"><path d="M0 0 L5 5 L0 10 Z" fill="#474747"/></svg>
<svg style="left:57.5px;top:482px" width="16" height="15" viewBox="0 0 16 15"><g fill="#4a90e2"><rect x="1.2" y="0" width="9.6" height="1.2"/><rect x="0" y="1" width="12" height="2.3"/><rect x="1" y="3.3" width="10" height="0.7"/><rect x="0" y="4.6" width="12" height="4" /><rect x="1" y="8.6" width="10" height="0.8"/><rect x="0" y="10" width="12" height="3.4"/><rect x="1" y="13.4" width="10" height="0.8"/></g><rect x="9" y="7.5" width="6.2" height="6.7" fill="#001c80"/><path d="M8.6 7.1 H15.4 M8.6 7.1 V14.4" stroke="#d4d4e4" stroke-width="0.6"/><path d="M9.8 8.4 L13.6 12.2" stroke="#72c98a" stroke-width="1.1"/><path d="M13.8 10.2 V12.4 H11.6" stroke="#3b9fb5" stroke-width="0.9" fill="none"/></svg>
<span class="t" style="left:75.5px;top:482.0px;line-height:16px;font-size:13px;color:#1a1a1a;letter-spacing:0.32px">v82sp1_bes</span>
<svg style="left:45px;top:510px" width="5" height="10" viewBox="0 0 5 10"><path d="M0 0 L5 5 L0 10 Z" fill="#474747"/></svg>
<svg style="left:57.5px;top:508px" width="16" height="15" viewBox="0 0 16 15"><g fill="#4a90e2"><rect x="1.2" y="0" width="9.6" height="1.2"/><rect x="0" y="1" width="12" height="2.3"/><rect x="1" y="3.3" width="10" height="0.7"/><rect x="0" y="4.6" width="12" height="4" /><rect x="1" y="8.6" width="10" height="0.8"/><rect x="0" y="10" width="12" height="3.4"/><rect x="1" y="13.4" width="10" height="0.8"/></g><rect x="9" y="7.5" width="6.2" height="6.7" fill="#001c80"/><path d="M8.6 7.1 H15.4 M8.6 7.1 V14.4" stroke="#d4d4e4" stroke-width="0.6"/><path d="M9.8 8.4 L13.6 12.2" stroke="#72c98a" stroke-width="1.1"/><path d="M13.8 10.2 V12.4 H11.6" stroke="#3b9fb5" stroke-width="0.9" fill="none"/></svg>
<span class="t" style="left:75.5px;top:508.0px;line-height:16px;font-size:13px;color:#1a1a1a;letter-spacing:0.32px">v82sp1_install</span>
<div style="left:1px;top:528px;width:418px;height:26px;background:#3584e4"></div>
<svg style="left:45px;top:536px" width="5" height="10" viewBox="0 0 5 10"><path d="M0 0 L5 5 L0 10 Z" fill="#b7d3f6"/></svg>
<svg style="left:57.5px;top:534px" width="16" height="15" viewBox="0 0 16 15"><g fill="#5a9fe6" opacity="0.45"><rect x="1.2" y="0" width="9.6" height="1.2"/><rect x="0" y="1" width="12" height="2.3"/><rect x="1" y="3.3" width="10" height="0.7"/><rect x="0" y="4.6" width="12" height="4" /><rect x="1" y="8.6" width="10" height="0.8"/><rect x="0" y="10" width="12" height="3.4"/><rect x="1" y="13.4" width="10" height="0.8"/></g><rect x="9" y="7.5" width="6" height="6.5" fill="#8a7590" opacity="0.9"/><g stroke="#b09aa0" stroke-width="0.6"><line x1="9.5" y1="9.5" x2="14.5" y2="9.5"/><line x1="9.5" y1="11.5" x2="14.5" y2="11.5"/></g></svg>
<span class="t" style="left:75.5px;top:534.0px;line-height:16px;font-size:13px;color:#fff;font-weight:bold;letter-spacing:0.45px">v82sp1_pas</span>
<svg style="left:45px;top:562px" width="5" height="10" viewBox="0 0 5 10"><path d="M0 0 L5 5 L0 10 Z" fill="#474747"/></svg>
<svg style="left:57.5px;top:560px" width="16" height="15" viewBox="0 0 16 15"><g fill="#4a90e2"><rect x="1.2" y="0" width="9.6" height="1.2"/><rect x="0" y="1" width="12" height="2.3"/><rect x="1" y="3.3" width="10" height="0.7"/><rect x="0" y="4.6" width="12" height="4" /><rect x="1" y="8.6" width="10" height="0.8"/><rect x="0" y="10" width="12" height="3.4"/><rect x="1" y="13.4" width="10" height="0.8"/></g><rect x="9" y="7.5" width="6.2" height="6.7" fill="#001c80"/><path d="M8.6 7.1 H15.4 M8.6 7.1 V14.4" stroke="#d4d4e4" stroke-width="0.6"/><path d="M9.8 8.4 L13.6 12.2" stroke="#72c98a" stroke-width="1.1"/><path d="M13.8 10.2 V12.4 H11.6" stroke="#3b9fb5" stroke-width="0.9" fill="none"/></svg>
<span class="t" style="left:75.5px;top:560.0px;line-height:16px;font-size:13px;color:#1a1a1a;letter-spacing:0.32px">v82sp1_zhaoxr</span>
<svg style="left:45px;top:588px" width="5" height="10" viewBox="0 0 5 10"><path d="M0 0 L5 5 L0 10 Z" fill="#474747"/></svg>
<svg style="left:57.5px;top:586px" width="16" height="15" viewBox="0 0 16 15"><g fill="#4a90e2"><rect x="1.2" y="0" width="9.6" height="1.2"/><rect x="0" y="1" width="12" height="2.3"/><rect x="1" y="3.3" width="10" height="0.7"/><rect x="0" y="4.6" width="12" height="4" /><rect x="1" y="8.6" width="10" height="0.8"/><rect x="0" y="10" width="12" height="3.4"/><rect x="1" y="13.4" width="10" height="0.8"/></g><rect x="9" y="7.5" width="6.2" height="6.7" fill="#001c80"/><path d="M8.6 7.1 H15.4 M8.6 7.1 V14.4" stroke="#d4d4e4" stroke-width="0.6"/><path d="M9.8 8.4 L13.6 12.2" stroke="#72c98a" stroke-width="1.1"/><path d="M13.8 10.2 V12.4 H11.6" stroke="#3b9fb5" stroke-width="0.9" fill="none"/></svg>
<span class="t" style="left:75.5px;top:586.0px;line-height:16px;font-size:13px;color:#1a1a1a;letter-spacing:0.32px">v82tov82sp1</span>
<svg style="left:27px;top:614px" width="5" height="10" viewBox="0 0 5 10"><path d="M0 0 L5 5 L0 10 Z" fill="#474747"/></svg>
<svg style="left:40px;top:612px" width="15" height="15" viewBox="0 0 15 15"><path d="M0 1 H6 L7 3 H14 V14 H0 Z" fill="#f0cf45"/><rect x="0" y="1" width="6" height="2" fill="#e0a81c"/></svg>
<span class="t" style="left:57.5px;top:612.0px;line-height:16px;font-size:13px;color:#1a1a1a">表空间</span>
<svg style="left:27px;top:640px" width="5" height="10" viewBox="0 0 5 10"><path d="M0 0 L5 5 L0 10 Z" fill="#474747"/></svg>
<svg style="left:40px;top:638px" width="15" height="15" viewBox="0 0 15 15"><path d="M1 2 L7.5 0 L14 2 V9 Q14 14 7.5 15 Q1 14 1 9 Z" fill="#9b6a3e"/><rect x="5" y="6.5" width="5" height="4.5" fill="#f3e9df"/><path d="M6 6.5 V5 a1.5 1.5 0 0 1 3 0 V6.5" stroke="#f3e9df" fill="none"/></svg>
<span class="t" style="left:57.5px;top:638.0px;line-height:16px;font-size:13px;color:#1a1a1a">安全性</span>
<svg style="left:27px;top:666px" width="5" height="10" viewBox="0 0 5 10"><path d="M0 0 L5 5 L0 10 Z" fill="#474747"/></svg>
<svg style="left:40px;top:664px" width="15" height="15" viewBox="0 0 15 15"><circle cx="7.5" cy="7.5" r="5.5" fill="#8a879e"/><g stroke="#8a879e" stroke-width="3"><line x1="7.5" y1="0" x2="7.5" y2="15"/><line x1="0" y1="7.5" x2="15" y2="7.5"/><line x1="2.2" y1="2.2" x2="12.8" y2="12.8"/><line x1="12.8" y1="2.2" x2="2.2" y2="12.8"/></g><circle cx="7.5" cy="7.5" r="2.2" fill="#fff"/></svg>
<span class="t" style="left:57.5px;top:664.0px;line-height:16px;font-size:13px;color:#1a1a1a">管理</span>
<svg style="left:27px;top:692px" width="5" height="10" viewBox="0 0 5 10"><path d="M0 0 L5 5 L0 10 Z" fill="#474747"/></svg>
<svg style="left:40px;top:690px" width="15" height="15" viewBox="0 0 15 15"><path d="M7.5 9 L0 5 L7.5 1 L15 5 Z" fill="#3d63a8"/><path d="M0 8 L7.5 12 L15 8" stroke="#6a8fcf" fill="none" stroke-width="1.2"/><path d="M0 10.5 L7.5 14.5 L15 10.5" stroke="#6a8fcf" fill="none" stroke-width="1.2"/></svg>
<span class="t" style="left:57.5px;top:690.0px;line-height:16px;font-size:13px;color:#1a1a1a">备份</span>
<svg style="left:27px;top:718px" width="5" height="10" viewBox="0 0 5 10"><path d="M0 0 L5 5 L0 10 Z" fill="#474747"/></svg>
<svg style="left:40px;top:716px" width="15" height="15" viewBox="0 0 15 15"><circle cx="7.5" cy="7.5" r="7.3" fill="#e0a11a"/><rect x="6.4" y="6" width="2.2" height="6" fill="#fff"/><circle cx="7.5" cy="3.8" r="1.2" fill="#fff"/></svg>
<span class="t" style="left:57.5px;top:716.0px;line-height:16px;font-size:13px;color:#1a1a1a">系统信息</span>
<div style="left:0px;top:853px;width:12.5px;height:37px;background:#474747;border-radius:0 3px 3px 0"></div>
<div style="left:0px;top:853px;width:1px;height:37px;background:#3a3836"></div>
<div style="left:4.5px;top:857.5px;width:3.5px;height:0.5px;background:#8c8c8c"></div>
<div style="left:4.5px;top:858.5px;width:3.5px;height:0.5px;background:#8c8c8c"></div>
<div style="left:4.5px;top:859.5px;width:3.5px;height:0.5px;background:#8c8c8c"></div>
<div style="left:4.5px;top:860.5px;width:3.5px;height:0.5px;background:#8c8c8c"></div>
<div style="left:4.5px;top:861.5px;width:3.5px;height:0.5px;background:#8c8c8c"></div>
<div style="left:4.5px;top:862.5px;width:3.5px;height:0.5px;background:#8c8c8c"></div>
<div style="left:4.5px;top:863.5px;width:3.5px;height:0.5px;background:#8c8c8c"></div>
<div style="left:4.5px;top:864.5px;width:3.5px;height:0.5px;background:#8c8c8c"></div>
<div style="left:4.5px;top:865.5px;width:3.5px;height:0.5px;background:#8c8c8c"></div>
<div style="left:4.5px;top:866.5px;width:3.5px;height:0.5px;background:#8c8c8c"></div>
<div style="left:4.5px;top:867.5px;width:3.5px;height:0.5px;background:#8c8c8c"></div>
<div style="left:4.5px;top:868.5px;width:3.5px;height:0.5px;background:#5a6070"></div>
<div style="left:4.5px;top:869.5px;width:3.5px;height:0.7px;background:#e8a317"></div>
<div style="left:4.5px;top:873.5px;width:3.5px;height:0.5px;background:#8c8c8c"></div>
<div style="left:4.5px;top:874.5px;width:3.5px;height:0.5px;background:#8c8c8c"></div>
<div style="left:4.5px;top:875.5px;width:3.5px;height:0.5px;background:#8c8c8c"></div>
<div style="left:4.5px;top:876.5px;width:3.5px;height:0.5px;background:#8c8c8c"></div>
<div style="left:4.5px;top:877.5px;width:3.5px;height:0.5px;background:#8c8c8c"></div>
<div style="left:4.5px;top:878.5px;width:3.5px;height:0.5px;background:#8c8c8c"></div>
<div style="left:4.5px;top:879.5px;width:3.5px;height:0.5px;background:#8c8c8c"></div>
<div style="left:4.5px;top:880.5px;width:3.5px;height:0.5px;background:#8c8c8c"></div>
<div style="left:4.5px;top:881.5px;width:3.5px;height:0.5px;background:#8c8c8c"></div>
<div style="left:4.5px;top:882.5px;width:3.5px;height:0.5px;background:#8c8c8c"></div>
<div style="left:4.5px;top:883.5px;width:3.5px;height:0.5px;background:#8c8c8c"></div>
<div style="left:4.5px;top:884.5px;width:3.5px;height:0.5px;background:#8c8c8c"></div>
<div style="left:424px;top:99px;width:1496px;height:879px;background:#fff;border:1px solid #cdc7c2;border-right-width:2px;box-sizing:border-box"></div>
<div style="left:425px;top:100px;width:1493px;height:33px;background:#e1dedb;border-bottom:1px solid #cfcac5;box-sizing:border-box"></div>
<div style="left:425px;top:100px;width:237px;height:33px;background:#fff"></div>
<div style="left:662px;top:100px;width:1px;height:33px;background:#cdc8c3"></div>
<svg style="left:430px;top:108px" width="16" height="17" viewBox="0 0 16 17"><path d="M10 1 H1 V12 H6" fill="none" stroke="#2f5fae" stroke-width="1.3"/><path d="M2.5 5 l1-1 l1 1 l1-1 M6 3 v4 h2 M7 3 v0" stroke="#4a9a2a" stroke-width="0.9" fill="none"/><path d="M10 1 V5" stroke="#2f5fae" stroke-width="1.3"/><circle cx="10.5" cy="11.5" r="4" fill="#fff" stroke="#4a74c5" stroke-width="1" stroke-dasharray="1.2 0.6"/><path d="M10 9 V12 H12" stroke="#2f5fae" fill="none" stroke-width="0.9"/></svg>
<span class="t" style="left:449px;top:110.0px;line-height:16px;font-size:13px;color:#2e3436;letter-spacing:0.33px">*&lt;kingbase-pasuser&gt; Script-13</span>
<svg style="left:644px;top:112px" width="10" height="10" viewBox="0 0 10 10"><path d="M1 1h2v1h-2zM7 1h2v1h-2zM1 2h3v1h-3zM6 2h3v1h-3zM2 3h6v1h-6zM3 4h4v2h-4zM2 6h6v1h-6zM1 7h3v1h-3zM6 7h3v1h-3zM1 8h2v1h-2zM7 8h2v1h-2z" fill="#fff" shape-rendering="crispEdges"/><path d="M0 0h3v1h-3zM7 0h3v1h-3zM0 1h1v2h-1zM3 1h1v1h-1zM6 1h1v1h-1zM9 1h1v2h-1zM4 2h2v1h-2zM1 3h1v1h-1zM8 3h1v1h-1zM2 4h1v2h-1zM7 4h1v2h-1zM1 6h1v1h-1zM8 6h1v1h-1zM0 7h1v2h-1zM4 7h2v1h-2zM9 7h1v2h-1zM3 8h1v1h-1zM6 8h1v1h-1zM0 9h3v1h-3zM7 9h3v1h-3z" fill="#111" shape-rendering="crispEdges"/></svg>
<div style="left:1867px;top:111px;width:10px;height:4px;border:1px solid #555;box-sizing:border-box;background:#fff"></div>
<div style="left:1894px;top:111px;width:10px;height:10px;border:1px solid #555;border-top-width:2px;box-sizing:border-box;background:#fff"></div>
<div style="left:425px;top:133px;width:1493px;height:32.5px;background:#e1dedb"></div>
<svg style="left:432px;top:139px" width="18" height="18" viewBox="0 0 18 18"><path d="M0 0.5 H17 V16.5 H0 Z" fill="#7f7894"/><g fill="#e1dedb"><rect x="2" y="0" width="1" height="1"/><rect x="6" y="0" width="1" height="1"/><rect x="10" y="0" width="1" height="1"/><rect x="14" y="0" width="1" height="1"/></g><rect x="3" y="5" width="11" height="2" fill="#e6e3ec"/><rect x="3" y="10" width="7" height="2" fill="#e6e3ec"/><circle cx="14" cy="14" r="3.8" fill="#3d9af0"/><path d="M13.5 12 V14.5 H15.5" stroke="#fff" stroke-width="0.8" fill="none"/></svg>
<span class="t" style="left:455.5px;top:144.5px;line-height:16px;font-size:13px;color:#1a1a1a">执行计划</span>
<svg style="left:521px;top:138.5px" width="18" height="17" viewBox="0 0 18 17"><rect x="0" y="0" width="18" height="3" fill="#4a7ed0"/><rect x="0" y="3" width="18" height="13" fill="#5ba7ea"/><path d="M2 11 L6 8 L10 10 L15 7" stroke="#fff" stroke-width="1.3" fill="none"/></svg>
<span class="t" style="left:544.5px;top:144.5px;line-height:16px;font-size:13px;color:#1a1a1a">性能报告</span>
<svg style="left:611px;top:138px" width="17" height="17" viewBox="0 0 17 17"><rect x="0" y="2" width="16" height="14" fill="#a38d46"/><rect x="0" y="2" width="16" height="3" fill="#8a7637"/><rect x="3" y="0" width="2" height="3" fill="#8a7637"/><rect x="11" y="0" width="2" height="3" fill="#8a7637"/><circle cx="13" cy="13" r="3.5" fill="#e8f2fc" stroke="#3d8fe0"/><circle cx="13" cy="13" r="1.2" fill="#3d8fe0"/></svg>
<span class="t" style="left:634px;top:144.5px;line-height:16px;font-size:13px;color:#1a1a1a">执行日志</span>
<svg style="left:700px;top:139px" width="18" height="17" viewBox="0 0 18 17"><path d="M2.5 0 H14.5 V16 H0 V2.5 Z" fill="#d6c25e"/><path d="M0 2.5 L2.5 0 V2.5 Z" fill="#efe3a8"/><path d="M6 12 H16 M14 10 L16.5 12 L14 14" stroke="#6b5d2a" stroke-width="1.6" fill="none"/></svg>
<span class="t" style="left:722.5px;top:144.5px;line-height:16px;font-size:13px;color:#1a1a1a">输出</span>
<svg style="left:765.5px;top:139px" width="11" height="16" viewBox="0 0 11 16"><path d="M0 0 L10.5 8 L0 16 Z" fill="#2f8ae0"/></svg>
<span class="t" style="left:785px;top:144.5px;line-height:16px;font-size:13px;color:#1a1a1a">执行</span>
<svg style="left:825.5px;top:139px" width="18" height="17" viewBox="0 0 18 17"><rect x="0" y="0" width="16" height="16" fill="#8cbf6a"/><rect x="0" y="0" width="16" height="3" fill="#3a7a10"/><path d="M6 6.5 L4 8.5 L6 10.5" stroke="#fff" stroke-width="1.3" fill="none"/><path d="M13 10 V17 M9.5 13.5 H16.5" stroke="#e8f3df" stroke-width="3"/><path d="M13 10.5 V16.5 M10 13.5 H16" stroke="#4a9a2a" stroke-width="1.4"/></svg>
<svg style="left:853.5px;top:139px" width="17" height="17" viewBox="0 0 17 17"><rect x="0" y="0" width="16" height="16" fill="#6db4f5"/><rect x="0" y="0" width="16" height="3" fill="#3b5fa8"/><path d="M6 6.5 L4 9 L6 11.5 M10 6.5 L12 9 L10 11.5" stroke="#fff" stroke-width="1.3" fill="none"/></svg>
<svg style="left:882px;top:139px" width="17" height="17" viewBox="0 0 17 17"><path d="M1.5 0 H15 L16 1 V9.5 H1.5 Z" fill="#8aa8c6"/><g stroke="#fff" stroke-width="1.1"><line x1="4" y1="3.5" x2="12.5" y2="3.5"/><line x1="4" y1="6" x2="9" y2="6"/></g><rect x="0" y="10" width="17" height="2.2" fill="#847c98"/><rect x="1.5" y="13" width="14" height="2.5" fill="#8aa8c6"/></svg>
<svg style="left:910.5px;top:139px" width="17" height="17" viewBox="0 0 17 17"><path d="M2.5 0 H15 V16 H0 V2.5 Z" fill="#857e9a"/><path d="M0 2.5 L2.5 0 V2.5 Z" fill="#c9c5d6"/><path d="M4 14.5 L13.5 3 L15.5 4.8 L6 16 L3.5 16.5 Z" fill="#7fb8f5" stroke="#3f8fe8" stroke-width="0.8"/></svg>
<div style="left:437px;top:166px;width:40px;height:366px;background:#e5e5ef"></div>
<div style="left:486.2px;top:166px;width:0.6px;height:386px;background:#f3efeb"></div>
<div style="left:489px;top:166px;width:1429px;height:366px;background:#3584e4"></div>
<div style="left:489px;top:532px;width:1.2px;height:18px;background:#000"></div>
<div class="codewrap">
<div class="code" style="top:-12px"><b>INSERT</b> <b>INTO</b> WORKTIME_CURRENCY (ID,ORG_ACCOUNT_ID,AM_WORK_BEGINTIME,AM_WORK_ENDTIME,PM_WORK_BEGINTIME,PM_WORK_ENDTIME,WEEK_DAY_NAME,IS_WORK,<b>YEAR</b>,UPDATE_TIME) <b>VALUES</b> (-302122503951</div>
<div class="code" style="top:8px"><b>INSERT</b> <b>INTO</b> WORKTIME_CURRENCY (ID,ORG_ACCOUNT_ID,AM_WORK_BEGINTIME,AM_WORK_ENDTIME,PM_WORK_BEGINTIME,PM_WORK_ENDTIME,WEEK_DAY_NAME,IS_WORK,<b>YEAR</b>,UPDATE_TIME) <b>VALUES</b> (16074974329</div>
<div class="code" style="top:28px"><b>INSERT</b> <b>INTO</b> WORKTIME_CURRENCY (ID,ORG_ACCOUNT_ID,AM_WORK_BEGINTIME,AM_WORK_ENDTIME,PM_WORK_BEGINTIME,PM_WORK_ENDTIME,WEEK_DAY_NAME,IS_WORK,<b>YEAR</b>,UPDATE_TIME) <b>VALUES</b> (36371429885</div>
<div class="code" style="top:48px"><b>INSERT</b> <b>INTO</b> WORKTIME_CURRENCY (ID,ORG_ACCOUNT_ID,AM_WORK_BEGINTIME,AM_WORK_ENDTIME,PM_WORK_BEGINTIME,PM_WORK_ENDTIME,WEEK_DAY_NAME,IS_WORK,<b>YEAR</b>,UPDATE_TIME) <b>VALUES</b> (42721949805</div>
<div class="code" style="top:68px"><b>INSERT</b> <b>INTO</b> WORKTIME_CURRENCY (ID,ORG_ACCOUNT_ID,AM_WORK_BEGINTIME,AM_WORK_ENDTIME,PM_WORK_BEGINTIME,PM_WORK_ENDTIME,WEEK_DAY_NAME,IS_WORK,<b>YEAR</b>,UPDATE_TIME) <b>VALUES</b> (49170632742</div>
<div class="code" style="top:88px"><b>INSERT</b> <b>INTO</b> WORKTIME_CURRENCY (ID,ORG_ACCOUNT_ID,AM_WORK_BEGINTIME,AM_WORK_ENDTIME,PM_WORK_BEGINTIME,PM_WORK_ENDTIME,WEEK_DAY_NAME,IS_WORK,<b>YEAR</b>,UPDATE_TIME) <b>VALUES</b> (68065539210</div>
<div class="code" style="top:108px"><b>INSERT</b> <b>INTO</b> WORKTIME_CURRENCY (ID,ORG_ACCOUNT_ID,AM_WORK_BEGINTIME,AM_WORK_ENDTIME,PM_WORK_BEGINTIME,PM_WORK_ENDTIME,WEEK_DAY_NAME,IS_WORK,<b>YEAR</b>,UPDATE_TIME) <b>VALUES</b> (82936255215</div>
<div class="code" style="top:128px"></div>
<div class="code" style="top:148px">-- A8N-2的调整语句</div>
<div class="code" style="top:168px"><b>update</b> portal_template_setting <b>set</b> TEMPLATE_ID=8663751873741276919 <b>where</b> ID=1980971278613168158;</div>
<div class="code" style="top:188px"><b>update</b> portal_hotspot <b>set</b> HOTSPOTVALUE='default/images/banner1.jpg,default/images/banner2.jpg,default/images/banner3.jpg,default/images/banner4.jpg,default/images/banner5.jpg,default/images/bannerN.png'</div>
<div class="code" style="top:208px"><b>update</b> portal_hotspot <b>set</b> HOTSPOTVALUE='zoom' <b>where</b> ID=8805407417000938312;</div>
<div class="code" style="top:228px"><b>update</b> portal_hotspot <b>set</b> HOTSPOTVALUE='rgb(37, 179, 59)',EXT5='100' <b>where</b> ID= -146135648656210740;</div>
<div class="code" style="top:248px"><b>update</b> portal_hotspot <b>set</b> HOTSPOTVALUE='rgb(0, 0, 0)',EXT5='20' <b>where</b> ID= -5046915897097699250;</div>
<div class="code" style="top:268px"><b>update</b> portal_hotspot <b>set</b> HOTSPOTVALUE='rgb(255, 255, 255)',EXT5='0' <b>where</b> ID=-8688100056899498251;</div>
<div class="code" style="top:288px"><b>update</b> portal_hotspot <b>set</b> HOTSPOTVALUE='2%,2%' <b>where</b> ID = 865606124918819988;</div>
<div class="code" style="top:308px"><b>update</b> portal_hotspot <b>set</b> HOTSPOTVALUE='default/images/logoN.png' <b>where</b> ID=7255514494517920856;</div>
<div class="code" style="top:328px"><b>update</b> priv_menu <b>set</b> <b>name</b>='system.menuname.AboutA8-N',ext7='关于A8-N' <b>where</b> id=-5810051334704771402;</div>
<div class="code" style="top:348px"><b>update</b> CTP_CONFIG <b>set</b> CONFIG_VALUE='A8NV5-2' <b>WHERE</b> ID=5006;</div>
</div>
<div class="lnwrap">
<div class="ln" style="top:-15px">34393</div>
<div class="ln" style="top:5px">34394</div>
<div class="ln" style="top:25px">34395</div>
<div class="ln" style="top:45px">34396</div>
<div class="ln" style="top:65px">34397</div>
<div class="ln" style="top:85px">34398</div>
<div class="ln" style="top:105px">34399</div>
<div class="ln" style="top:125px">34400</div>
<div class="ln" style="top:145px">34401</div>
<div class="ln" style="top:165px">34402</div>
<div class="ln" style="top:185px">34403</div>
<div class="ln" style="top:205px">34404</div>
<div class="ln" style="top:225px">34405</div>
<div class="ln" style="top:245px">34406</div>
<div class="ln" style="top:265px">34407</div>
<div class="ln" style="top:285px">34408</div>
<div class="ln" style="top:305px">34409</div>
<div class="ln" style="top:325px">34410</div>
<div class="ln" style="top:345px">34411</div>
<div class="ln" style="top:365px">34412</div>
</div>
<svg style="left:477px;top:317px" width="9.5" height="9.5" viewBox="0 0 9.5 9.5"><circle cx="4.75" cy="4.75" r="4.2" fill="#eef1f5" stroke="#b8c2cf" stroke-width="0.9"/><line x1="2.5" y1="4.75" x2="7" y2="4.75" stroke="#556" stroke-width="1"/></svg>
<div style="left:425px;top:552px;width:1493px;height:426px;background:#e1dedb"></div>
<svg style="left:1152px;top:553px" width="8" height="4" viewBox="0 0 8 4"><path d="M0 4 L4 0 L8 4 Z" fill="#5560a0"/></svg>
<svg style="left:1184px;top:553px" width="8" height="4" viewBox="0 0 8 4"><path d="M0 0 H8 L4 4 Z" fill="#5560a0"/></svg>
<div style="left:542px;top:581px;width:1376px;height:1px;background:#aaaaaa"></div>
<div style="left:424.5px;top:557px;width:118px;height:25px;border:1px solid #c9c4bf;border-bottom:none;border-radius:0 4px 0 0;box-sizing:border-box;background:#e1dedb"></div>
<svg style="left:430.5px;top:563px" width="12" height="13" viewBox="0 0 12 13"><rect x="0.5" y="0.5" width="11" height="11" fill="#fff" stroke="#2a8ad8"/><g stroke="#2a8ad8" stroke-width="0.9"><line x1="0" y1="4" x2="12" y2="4"/><line x1="0" y1="8" x2="12" y2="8"/><line x1="4" y1="0" x2="4" y2="12"/><line x1="8" y1="0" x2="8" y2="12"/></g></svg>
<span class="t" style="left:449px;top:563.0px;line-height:16px;font-size:13px;color:#1a1a1a;letter-spacing:0.42px">Statistics 1</span>
<svg style="left:525px;top:565px" width="10" height="10" viewBox="0 0 10 10"><path d="M1 1h2v1h-2zM7 1h2v1h-2zM1 2h3v1h-3zM6 2h3v1h-3zM2 3h6v1h-6zM3 4h4v2h-4zM2 6h6v1h-6zM1 7h3v1h-3zM6 7h3v1h-3zM1 8h2v1h-2zM7 8h2v1h-2z" fill="#fff" shape-rendering="crispEdges"/><path d="M0 0h3v1h-3zM7 0h3v1h-3zM0 1h1v2h-1zM3 1h1v1h-1zM6 1h1v1h-1zM9 1h1v2h-1zM4 2h2v1h-2zM1 3h1v1h-1zM8 3h1v1h-1zM2 4h1v2h-1zM7 4h1v2h-1zM1 6h1v1h-1zM8 6h1v1h-1zM0 7h1v2h-1zM4 7h2v1h-2zM9 7h1v2h-1zM3 8h1v1h-1zM6 8h1v1h-1zM0 9h3v1h-3zM7 9h3v1h-3z" fill="#111" shape-rendering="crispEdges"/></svg>
<div style="left:428.5px;top:590.5px;width:1221px;height:22.5px;background:#fff;border:1px solid #cbc6c1;box-sizing:border-box"></div>
<svg style="left:431px;top:594px" width="15" height="13" viewBox="0 0 15 13"><path d="M0 1 H8 M0.5 1 V2.5 M7.5 1 V2.5 M4 1 V12 M2 12 H6" stroke="#3557a8" stroke-width="1" fill="none"/><path d="M5 10 H8.5" stroke="#4a7fd0" stroke-width="0.9"/><path d="M12 6.5 L9.5 8.5 L12 10.5" stroke="#4a7fd0" stroke-width="1" fill="none"/></svg>
<div style="left:447px;top:593px;width:347px;height:20px;overflow:hidden">
<span class="t" style="left:0px;top:2.8000000000000007px;line-height:16px;font-size:13.5px;color:#2f9a2f;letter-spacing:-0.45px">CREATE TABLE ADDRESSBOOK ( ID INT8 NOT NULL, MEMO</span>
</div>
<div style="left:798px;top:592px;width:0.8px;height:18px;background:#9a9a9a"></div>
<svg style="left:803px;top:593px" width="15" height="15" viewBox="0 0 15 15"><g fill="#666"><path d="M0 0 H5 L0 5 Z"/><path d="M15 0 V5 L10 0 Z"/><path d="M0 15 V10 L5 15 Z"/><path d="M15 15 H10 L15 10 Z"/></g><g stroke="#666" stroke-width="1.6"><path d="M1.5 1.5 L5.5 5.5 M13.5 1.5 L9.5 5.5 M1.5 13.5 L5.5 9.5 M13.5 13.5 L9.5 9.5"/></g></svg>
<span class="t" style="left:825.5px;top:595px;line-height:16px;font-size:13px;color:#b2b2b2">输入一个 <i>SQL</i> 表达式来过滤结果 <i>(</i>使用 <i>Ctrl+Space)</i></span>
<svg style="left:1606px;top:596px" width="12" height="14" viewBox="0 0 12 14"><path d="M0 0 L11 7 L0 14 Z" fill="#777"/></svg>
<div style="left:1629px;top:593px;width:0.8px;height:17px;background:#888"></div>
<svg style="left:1633px;top:597px" width="11" height="6" viewBox="0 0 11 6"><path d="M0 0 H11 L5.5 5.5 Z" fill="#555"/></svg>
<svg style="left:1664px;top:593px" width="15" height="15" viewBox="0 0 15 15"><path d="M5 13 L1 9 L9 1 L14 6 L7 13 Z" fill="none" stroke="#aaa" stroke-width="1.3"/><line x1="10" y1="14" x2="14" y2="14" stroke="#aaa"/></svg>
<svg style="left:1690px;top:593px" width="17" height="16" viewBox="0 0 17 16"><path d="M0.5 0.5 H11 L7 5.5 V13 L4.5 11 V5.5 Z" fill="none" stroke="#999" stroke-width="1"/><rect x="10" y="9" width="5" height="5" fill="none" stroke="#999"/></svg>
<svg style="left:1718px;top:592px" width="16" height="17" viewBox="0 0 16 17"><rect x="0.5" y="0.5" width="13" height="13" fill="#4aa3e6" stroke="#1a78c8"/><rect x="0.5" y="0.5" width="13" height="3" fill="#1a78c8"/><rect x="5" y="4" width="8" height="9" fill="#d7ecfb"/><circle cx="13" cy="13" r="3" fill="#1a78c8"/><circle cx="13" cy="13" r="1" fill="#fff"/></svg>
<div style="left:1741px;top:594px;width:1.5px;height:1.5px;background:#999"></div>
<div style="left:1741px;top:598px;width:1.5px;height:1.5px;background:#999"></div>
<div style="left:1741px;top:602px;width:1.5px;height:1.5px;background:#999"></div>
<div style="left:1741px;top:606px;width:1.5px;height:1.5px;background:#999"></div>
<div style="left:1746px;top:589px;width:0.7px;height:24px;background:#c8c3be"></div>
<svg style="left:1760px;top:593px" width="13" height="15" viewBox="0 0 13 15"><path d="M3 6 A5 5 0 0 1 11 4 M10 9 A5 5 0 0 1 2 11" stroke="#b3b3b3" stroke-width="1.5" fill="none"/></svg>
<svg style="left:1780px;top:598px" width="10" height="5" viewBox="0 0 10 5"><path d="M0 0 H10 L5 5 Z" fill="#999"/></svg>
<div style="left:1800px;top:594px;width:1.5px;height:1.5px;background:#999"></div>
<div style="left:1800px;top:598px;width:1.5px;height:1.5px;background:#999"></div>
<div style="left:1800px;top:602px;width:1.5px;height:1.5px;background:#999"></div>
<div style="left:1800px;top:606px;width:1.5px;height:1.5px;background:#999"></div>
<div style="left:1805px;top:589px;width:0.7px;height:24px;background:#c8c3be"></div>
<svg style="left:1818px;top:595px" width="16" height="12" viewBox="0 0 16 12"><path d="M0 6 L6 0 V4 H15 V8 H6 V12 Z" fill="#a6a6a6"/></svg>
<svg style="left:1842px;top:598px" width="10" height="5" viewBox="0 0 10 5"><path d="M0 0 H10 L5 5 Z" fill="#999"/></svg>
<svg style="left:1862px;top:595px" width="16" height="12" viewBox="0 0 16 12"><path d="M16 6 L10 0 V4 H1 V8 H10 V12 Z" fill="#a6a6a6"/></svg>
<svg style="left:1886px;top:598px" width="10" height="5" viewBox="0 0 10 5"><path d="M0 0 H10 L5 5 Z" fill="#999"/></svg>
<div style="left:425px;top:621.5px;width:1493px;height:1px;background:#d6d2cd"></div>
<div style="left:425px;top:656.5px;width:1493px;height:2px;background:#cfcac5"></div>
<svg style="left:434.5px;top:632px" width="15" height="15" viewBox="0 0 15 15"><circle cx="7.5" cy="7.5" r="6.5" fill="none" stroke="#22a23c" stroke-width="1.4"/><path d="M4 7.5 L6.5 10 L11 5" stroke="#22a23c" stroke-width="1.4" fill="none"/></svg>
<span class="t" style="left:463px;top:632.0px;line-height:16px;font-size:13px;color:#9c9c9c">保存</span>
<svg style="left:500.5px;top:633px" width="13" height="13" viewBox="0 0 13 13"><rect x="0.6" y="0.6" width="11.8" height="11.8" fill="#f7a09d" stroke="#e8342f" stroke-width="1.2"/><path d="M3.5 3.5 L9.5 9.5 M9.5 3.5 L3.5 9.5" stroke="#e8342f" stroke-width="0.9"/></svg>
<span class="t" style="left:527.5px;top:632.0px;line-height:16px;font-size:13px;color:#9c9c9c">取消</span>
<svg style="left:565px;top:632px" width="15" height="15" viewBox="0 0 15 15"><path d="M1 14 V3 Q1 0.5 4 0.5 H14 V12 H3 Q1 12 1 14 Z" fill="#2a79c9"/><circle cx="8" cy="7" r="3" fill="none" stroke="#fff" stroke-width="1"/></svg>
<span class="t" style="left:592px;top:632.0px;line-height:16px;font-size:13px;color:#9c9c9c">脚本</span>
<div style="left:634px;top:626px;width:0.8px;height:30px;background:#cbc6c1"></div>
<svg style="left:649px;top:633px" width="16" height="13" viewBox="0 0 16 13"><g fill="#2a82d4"><rect x="0" y="0" width="13" height="1.8"/><rect x="0" y="5" width="9" height="1.8"/><rect x="0" y="10" width="9" height="1.8"/></g><path d="M9 12 L14 6" stroke="#2a82d4" stroke-width="1.6"/></svg>
<svg style="left:675px;top:633px" width="16" height="13" viewBox="0 0 16 13"><g fill="#2a82d4"><rect x="0" y="0" width="13" height="1.8"/><rect x="0" y="5" width="9" height="1.8"/><rect x="0" y="10" width="9" height="1.8"/></g><path d="M12 6 V13 M8.5 9.5 H15.5" stroke="#21a33a" stroke-width="1.8"/></svg>
<svg style="left:702px;top:633px" width="16" height="13" viewBox="0 0 16 13"><g fill="#2a82d4"><rect x="0" y="0" width="13" height="1.8"/><rect x="0" y="5" width="9" height="1.8"/><rect x="0" y="10" width="9" height="1.8"/></g><circle cx="11" cy="9" r="3.5" fill="none" stroke="#2a82d4"/><path d="M11 7 V11 M9 9 H13" stroke="#21a33a" stroke-width="0.9"/></svg>
<svg style="left:729px;top:633px" width="16" height="13" viewBox="0 0 16 13"><g fill="#2a82d4"><rect x="0" y="0" width="13" height="1.8"/><rect x="0" y="5" width="9" height="1.8"/><rect x="0" y="10" width="9" height="1.8"/></g><rect x="8" y="8" width="7" height="2" fill="#e03c31"/></svg>
<div style="left:762px;top:633px;width:1.5px;height:1.5px;background:#a29c96"></div>
<div style="left:762px;top:637px;width:1.5px;height:1.5px;background:#a29c96"></div>
<div style="left:762px;top:641px;width:1.5px;height:1.5px;background:#a29c96"></div>
<div style="left:762px;top:645px;width:1.5px;height:1.5px;background:#a29c96"></div>
<div style="left:767px;top:626px;width:0.8px;height:30px;background:#cbc6c1"></div>
<svg style="left:790.5px;top:632px" width="13" height="13" viewBox="0 0 13 13"><path d="M6.5 0 L10 4 H7.5 V9 H5.5 V4 H3 Z" fill="#2a82d4"/><rect x="0" y="11" width="13" height="1.5" fill="#2a82d4"/></svg>
<div style="left:823px;top:633px;width:1.5px;height:1.5px;background:#a29c96"></div>
<div style="left:823px;top:637px;width:1.5px;height:1.5px;background:#a29c96"></div>
<div style="left:823px;top:641px;width:1.5px;height:1.5px;background:#a29c96"></div>
<div style="left:823px;top:645px;width:1.5px;height:1.5px;background:#a29c96"></div>
<div style="left:827.5px;top:626px;width:0.8px;height:30px;background:#cbc6c1"></div>
<svg style="left:836.5px;top:633px" width="15" height="13" viewBox="0 0 15 13"><rect x="0.6" y="0.6" width="13.8" height="11.8" fill="none" stroke="#2a5fae" stroke-width="1.1"/><g stroke="#2a5fae" stroke-width="0.9"><line x1="0" y1="4.5" x2="15" y2="4.5"/><line x1="0" y1="8.5" x2="15" y2="8.5"/><line x1="5" y1="0" x2="5" y2="13"/><line x1="10" y1="0" x2="10" y2="13"/></g></svg>
<span class="t" style="left:865px;top:632.0px;line-height:16px;font-size:13px;color:#1a1a1a">网格</span>
<svg style="left:911px;top:632px" width="15" height="14" viewBox="0 0 15 14"><path d="M0 1 H8 M0.5 1 V2.5 M7.5 1 V2.5 M4 1 V12.5 M2 12.5 H6" stroke="#3557a8" stroke-width="1" fill="none"/><path d="M5 10.5 H8.5" stroke="#4a7fd0" stroke-width="0.9"/><path d="M12 7 L9.5 9 L12 11" stroke="#4a7fd0" stroke-width="1" fill="none"/></svg>
<span class="t" style="left:938px;top:632.0px;line-height:16px;font-size:13px;color:#1a1a1a">文本</span>
<svg style="left:986px;top:632px" width="14" height="15" viewBox="0 0 14 15"><path d="M0.6 0.6 H7 L10 3.6 V13.4 H0.6 Z" fill="none" stroke="#2a5fae" stroke-width="1.1"/><circle cx="10.5" cy="11.5" r="3" fill="#4a9ae8"/></svg>
<span class="t" style="left:1013px;top:632.0px;line-height:16px;font-size:13px;color:#1a1a1a">记录</span>
<div style="left:1059px;top:633px;width:1.5px;height:1.5px;background:#a29c96"></div>
<div style="left:1059px;top:637px;width:1.5px;height:1.5px;background:#a29c96"></div>
<div style="left:1059px;top:641px;width:1.5px;height:1.5px;background:#a29c96"></div>
<div style="left:1059px;top:645px;width:1.5px;height:1.5px;background:#a29c96"></div>
<div style="left:1064.9px;top:626px;width:0.8px;height:30px;background:#cbc6c1"></div>
<svg style="left:1074px;top:632px" width="14" height="14" viewBox="0 0 14 14"><path d="M1 7 V2.5 H11 M9 0.5 L11 2.5 L9 4.5 M13 7 V11.5 H3 M5 9.5 L3 11.5 L5 13.5" stroke="#2a5fae" stroke-width="1.2" fill="none"/></svg>
<span class="t" style="left:1101.6px;top:632.0px;line-height:16px;font-size:13px;color:#1a1a1a">面板</span>
<svg style="left:1140px;top:637px" width="11" height="6" viewBox="0 0 11 6"><path d="M0 0 H11 L5.5 5.5 Z" fill="#2e3436"/></svg>
<div style="left:425px;top:658.5px;width:1491px;height:285px;background:#fff"></div>
<div style="left:522px;top:658.5px;width:1px;height:285px;background:#eeeeee"></div>
<span class="t" style="left:433.5px;top:668.5px;line-height:16px;font-size:13px;color:#8f8f8f;font-weight:bold;letter-spacing:0.6px">Name</span>
<span class="t" style="left:531px;top:668.5px;line-height:16px;font-size:13px;color:#8f8f8f;font-weight:bold;letter-spacing:0.2px">Value</span>
<div style="left:425px;top:690.5px;width:1491px;height:1px;background:#e6e6e6"></div>
<div style="left:523px;top:691.5px;width:1393px;height:252px;overflow:hidden">
<span class="t" style="left:4.5px;top:-2.0px;line-height:16px;font-size:13px;color:#1a1a1a;white-space:pre;letter-spacing:0.518px">update portal_hotspot set HOTSPOTVALUE=&#x27;default/images/banner1.jpg,default/images/banner2.jpg,default/images/banner3.jpg,default/images/banner4.jpg,default/images/banner5.jpg,default/images/bannerN.png&#x27;,EXT3=&#x27;&#x27;,EXT4=&#x27;&#x27;</span>
<span class="t" style="left:4.5px;top:24.0px;line-height:16px;font-size:13px;color:#1a1a1a;white-space:pre;letter-spacing:0.155px">update portal_hotspot set HOTSPOTVALUE=&#x27;zoom&#x27; where ID=8805407417000938312;</span>
<span class="t" style="left:4.5px;top:50.0px;line-height:16px;font-size:13px;color:#1a1a1a;white-space:pre;letter-spacing:0.104px">update portal_hotspot set HOTSPOTVALUE=&#x27;rgb(37, 179, 59)&#x27;,EXT5=&#x27;100&#x27; where ID= -146135648656210740;</span>
<span class="t" style="left:4.5px;top:76.0px;line-height:16px;font-size:13px;color:#1a1a1a;white-space:pre;letter-spacing:0.113px">update portal_hotspot set HOTSPOTVALUE=&#x27;rgb(0, 0, 0)&#x27;,EXT5=&#x27;20&#x27; where ID= -5046915897097699250;</span>
<span class="t" style="left:4.5px;top:102.0px;line-height:16px;font-size:13px;color:#1a1a1a;white-space:pre;letter-spacing:0.103px">update portal_hotspot set HOTSPOTVALUE=&#x27;rgb(255, 255, 255)&#x27;,EXT5=&#x27;0&#x27; where ID=-8688100056899498251;</span>
<span class="t" style="left:4.5px;top:128.0px;line-height:16px;font-size:13px;color:#1a1a1a;white-space:pre;letter-spacing:0.126px">update portal_hotspot set HOTSPOTVALUE=&#x27;2%,2%&#x27; where ID = 865606124918819988;</span>
<span class="t" style="left:4.5px;top:154.0px;line-height:16px;font-size:13px;color:#1a1a1a;white-space:pre;letter-spacing:0.284px">update portal_hotspot set HOTSPOTVALUE=&#x27;default/images/logoN.png&#x27; where ID=7255514494517920856;</span>
<span class="t" style="left:4.5px;top:180.0px;line-height:16px;font-size:13px;color:#1a1a1a;white-space:pre;letter-spacing:0.258px">update priv_menu set name=&#x27;system.menuname.AboutA8-N&#x27;,ext7=&#x27;关于A8-N&#x27; where id=-5810051334704771402;</span>
<span class="t" style="left:4.5px;top:206.0px;line-height:16px;font-size:13px;color:#1a1a1a;white-space:pre;letter-spacing:-0.114px">update CTP_CONFIG set CONFIG_VALUE=&#x27;A8NV5-2&#x27; WHERE ID=5006</span>
</div>
<span class="t" style="left:429px;top:923.5px;line-height:16px;font-size:13px;color:#1a1a1a;letter-spacing:0.45px">Finish time</span>
<span class="t" style="left:527.5px;top:923.5px;line-height:16px;font-size:13px;color:#1a1a1a;letter-spacing:-0.2px">Wed Dec 20 10:31:46 CST 2023</span>
<div style="left:428.5px;top:939px;width:266px;height:3px;background:#a9acab;border-radius:2px"></div>
<div style="left:1914px;top:900.5px;width:3.5px;height:38.5px;background:#ababab;border-radius:2px"></div>
<div style="left:425px;top:943px;width:1493px;height:34px;background:#e1dedb"></div>
<div style="left:434px;top:952px;width:1.5px;height:1.5px;background:#a29c96"></div>
<div style="left:434px;top:956px;width:1.5px;height:1.5px;background:#a29c96"></div>
<div style="left:434px;top:960px;width:1.5px;height:1.5px;background:#a29c96"></div>
<div style="left:434px;top:964px;width:1.5px;height:1.5px;background:#a29c96"></div>
<div style="left:438.5px;top:946px;width:0.8px;height:30px;background:#cbc6c1"></div>
<svg style="left:452.7px;top:952px" width="12" height="14" viewBox="0 0 12 14"><rect x="0" y="0" width="2" height="14" fill="#1a8ad4"/><path d="M11 0.5 L5 7 L11 13.5" stroke="#1a8ad4" stroke-width="2" fill="none"/></svg>
<svg style="left:481px;top:952px" width="9" height="14" viewBox="0 0 9 14"><path d="M8 0.5 L1.5 7 L8 13.5" stroke="#1a8ad4" stroke-width="2" fill="none"/></svg>
<svg style="left:510px;top:952px" width="9" height="14" viewBox="0 0 9 14"><path d="M1 0.5 L7.5 7 L1 13.5" stroke="#1a8ad4" stroke-width="2" fill="none"/></svg>
<svg style="left:535px;top:952px" width="12" height="14" viewBox="0 0 12 14"><rect x="10" y="0" width="2" height="14" fill="#1a8ad4"/><path d="M1 0.5 L7 7 L1 13.5" stroke="#1a8ad4" stroke-width="2" fill="none"/></svg>
<div style="left:560.8px;top:946px;width:0.8px;height:30px;background:#cbc6c1"></div>
<svg style="left:573px;top:951px" width="15" height="16" viewBox="0 0 15 16"><path d="M1 6 V12 H7 M5 10 L7 12 L5 14" stroke="#2a82d4" fill="none" stroke-width="1"/><path d="M7 1 H12 L14 3 V9 H7 Z" fill="#4aa3e6" stroke="#2a82d4" stroke-width="0.8"/></svg>
<svg style="left:601px;top:951px" width="15" height="15" viewBox="0 0 15 15"><path d="M0.5 4 V0.5 H4 M11 0.5 H14.5 V4 M14.5 11 V14.5 H11 M4 14.5 H0.5 V11" stroke="#2a82d4" fill="none" stroke-width="1"/><rect x="4" y="3.5" width="7" height="8" fill="#4aa3e6" stroke="#2a82d4" stroke-width="0.8"/></svg>
<div style="left:629px;top:945.7px;width:67px;height:28.5px;background:#fff;border:1px solid #d5d0cb;border-radius:4px;box-sizing:border-box"></div>
<span class="t" style="left:636.6px;top:952.5px;line-height:16px;font-size:13px;color:#1a1a1a">200</span>
<svg style="left:711.6px;top:953px" width="12" height="13" viewBox="0 0 12 13"><path d="M2 6 A4.5 4.5 0 0 1 10 3.5 M10 7 A4.5 4.5 0 0 1 2 9.5" stroke="#444" stroke-width="1.5" fill="none"/><path d="M8 1 L11 4 L7.5 5 Z M4 12 L1 9 L4.5 8 Z" fill="#444"/></svg>
<div style="left:735px;top:949px;width:12px;height:21px;background:#e9e7e4"></div>
<span class="t" style="left:737.5px;top:952.0px;line-height:16px;font-size:13px;color:#1a1a1a">1</span>
<div style="left:752px;top:953px;width:1.5px;height:1.5px;background:#a29c96"></div>
<div style="left:752px;top:957px;width:1.5px;height:1.5px;background:#a29c96"></div>
<div style="left:752px;top:961px;width:1.5px;height:1.5px;background:#a29c96"></div>
<div style="left:752px;top:965px;width:1.5px;height:1.5px;background:#a29c96"></div>
<svg style="left:1630px;top:951px" width="15" height="14" viewBox="0 0 15 14"><rect x="4" y="3.5" width="10" height="7" fill="#4aa3e6" stroke="#2a82d4" stroke-width="0.8"/><path d="M2.5 0 V14 M0.5 1 H4.5 M0.5 13 H4.5" stroke="#2a82d4" stroke-width="1"/></svg>
<span class="t" style="left:1658px;top:950.5px;line-height:16px;font-size:13px;color:#1a1a1a;letter-spacing:0.16px">13050 row(s) updated - 11.72s [10:32:05]</span>
<div style="left:0px;top:978px;width:1920px;height:31px;background:#f6f5f4"></div>
<div style="left:0px;top:977px;width:420px;height:1px;background:#cdc7c2"></div>
<div style="left:424px;top:977px;width:1496px;height:1px;background:#cdc7c2"></div>
<div style="left:907.5px;top:979px;width:0.8px;height:26px;background:#dcd8d4"></div>
<div style="left:1060px;top:979px;width:0.8px;height:26px;background:#dcd8d4"></div>
<div style="left:1206.5px;top:979px;width:0.8px;height:26px;background:#dcd8d4"></div>
<div style="left:1353px;top:979px;width:0.8px;height:26px;background:#dcd8d4"></div>
<span class="t" style="left:914px;top:984.5px;line-height:16px;font-size:13px;color:#2e3436">可写</span>
<span class="t" style="left:1068px;top:984.5px;line-height:16px;font-size:13px;color:#2e3436">智能插入</span>
<span class="t" style="left:1213.6px;top:984.5px;line-height:16px;font-size:13px;color:#2e3436;letter-spacing:-0.19px">34412 : 1 [4124016]</span>
<span class="t" style="left:1359px;top:984.5px;line-height:16px;font-size:13px;color:#2e3436">Sel: 4... 34411</span>
<div style="left:1448px;top:986px;width:1.5px;height:1.5px;background:#a29c96"></div>
<div style="left:1448px;top:990px;width:1.5px;height:1.5px;background:#a29c96"></div>
<div style="left:1448px;top:994px;width:1.5px;height:1.5px;background:#a29c96"></div>
<div style="left:1448px;top:998px;width:1.5px;height:1.5px;background:#a29c96"></div>
<div style="left:1451px;top:978px;width:164px;height:31px;background:#f6f5f4;border-top:1px solid #a9a9a9;box-sizing:border-box"></div>
<div style="left:1451px;top:978px;width:74.8px;height:31px;background:#a3a3a3"></div>
<span class="t" style="left:1463px;top:984.5px;line-height:16px;font-size:13px;color:#2e3436">354兆（共 620兆)</span>
<div style="left:1580px;top:979px;width:1px;height:30px;background:#7d7d7d"></div>
<svg style="left:1583px;top:986px" width="13" height="15.5" viewBox="0 0 13 15.5"><rect x="0" y="1.3" width="12" height="1.3" fill="#5b7bb5"/><rect x="4.5" y="0.3" width="3" height="1.2" fill="#5b7bb5"/><path d="M1 3.5 H11 V13.5 Q11 15 9.5 15 H2.5 Q1 15 1 13.5 Z" fill="#b9cfec" stroke="#5b7bb5" stroke-width="0.9"/><path d="M4 4.5 V14 M6 4.5 V14 M8 4.5 V14" stroke="#5b7bb5" stroke-width="0.8"/></svg>
<div style="left:1620px;top:986px;width:1.5px;height:1.5px;background:#a29c96"></div>
<div style="left:1620px;top:990px;width:1.5px;height:1.5px;background:#a29c96"></div>
<div style="left:1620px;top:994px;width:1.5px;height:1.5px;background:#a29c96"></div>
<div style="left:1620px;top:998px;width:1.5px;height:1.5px;background:#a29c96"></div>
</div></body></html>
